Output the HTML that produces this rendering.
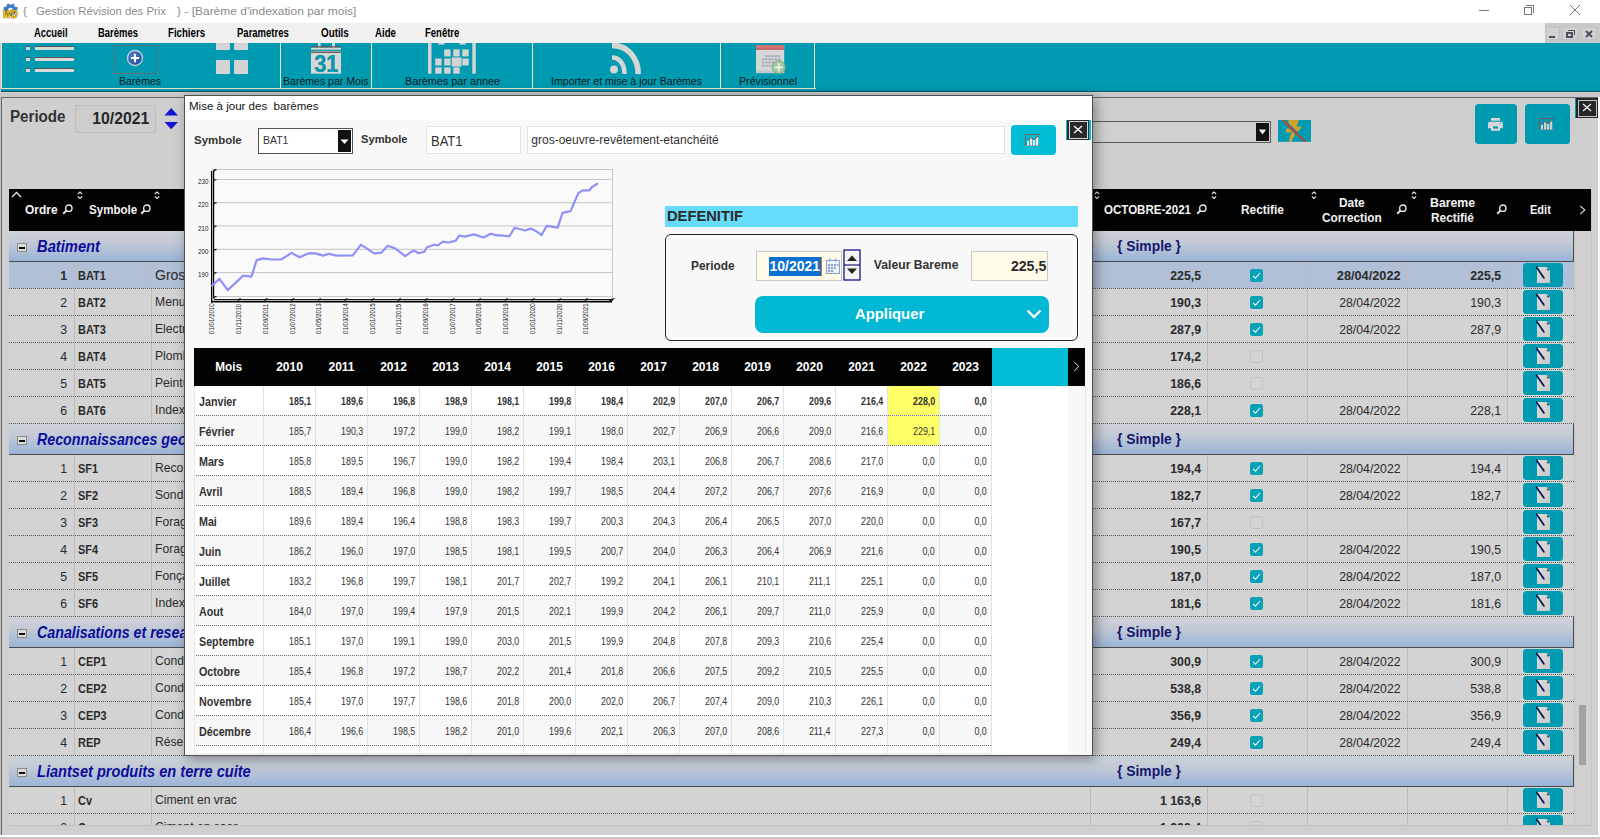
<!DOCTYPE html>
<html><head><meta charset="utf-8">
<style>
*{margin:0;padding:0;box-sizing:border-box}
html,body{width:1600px;height:839px;overflow:hidden;background:#fff;font-family:"Liberation Sans",sans-serif;color:#222}
.abs{position:absolute}
.t{position:absolute;white-space:nowrap;line-height:1}
.dot{position:absolute;height:1px;background:repeating-linear-gradient(90deg,#5a5a5a 0 1px,transparent 1px 2px)}
.vl{position:absolute;width:1px}
</style></head><body>

<div class="abs" style="left:0;top:0;width:1600px;height:23px;background:#fff"></div>
<svg class="abs" style="left:0;top:0" width="22" height="22" viewBox="0 0 22 22">
<g fill="#3f7dc6"><circle cx="10.5" cy="10.2" r="5.6"/>
<rect x="7" y="3.8" width="2.6" height="3" transform="rotate(-20 8.3 5.3)"/><rect x="11.6" y="3.8" width="2.6" height="3" transform="rotate(20 12.9 5.3)"/>
<rect x="3.6" y="7" width="2.8" height="2.6" transform="rotate(-30 5 8.3)"/><rect x="14.8" y="7" width="2.8" height="2.6" transform="rotate(30 16.2 8.3)"/></g>
<circle cx="10.5" cy="10.4" r="2.6" fill="#fff"/>
<text x="3" y="17.7" font-family="Liberation Sans" font-weight="bold" font-style="italic" font-size="10" textLength="14.5" lengthAdjust="spacingAndGlyphs" fill="#ffc400" stroke="#2a2000" stroke-width="0.7" paint-order="stroke">WD</text></svg>
<div class="t" style="left:23.00px;top:5.97px;font-size:11.5px;font-weight:normal;font-style:normal;color:#8e8a8c;">{</div>
<div class="t" style="left:36.00px;top:5.97px;font-size:11.5px;font-weight:normal;font-style:normal;color:#8e8a8c;transform:scaleX(0.9874);transform-origin:0 0;">Gestion Révision des Prix</div>
<div class="t" style="left:176.80px;top:5.97px;font-size:11.5px;font-weight:normal;font-style:normal;color:#8e8a8c;transform:scaleX(1.0417);transform-origin:0 0;">} - [Barème d'indexation par mois]</div>
<div class="abs" style="left:1479px;top:10px;width:10px;height:1px;background:#777"></div>
<div class="abs" style="left:1524px;top:7px;width:8px;height:8px;border:1px solid #777"></div>
<div class="abs" style="left:1526px;top:5px;width:8px;height:8px;border-top:1px solid #777;border-right:1px solid #777"></div>
<svg class="abs" style="left:1569px;top:4px" width="12" height="12"><path d="M1 1L11 11M11 1L1 11" stroke="#777" stroke-width="1"/></svg>
<div class="abs" style="left:0;top:23px;width:1600px;height:20px;background:#f0f0f0"></div>
<div class="t" style="left:34.00px;top:26.84px;font-size:12px;font-weight:bold;font-style:normal;color:#000;transform:scaleX(0.7849);transform-origin:0 0;">Accueil</div>
<div class="t" style="left:98.00px;top:26.84px;font-size:12px;font-weight:bold;font-style:normal;color:#000;transform:scaleX(0.7890);transform-origin:0 0;">Barèmes</div>
<div class="t" style="left:168.00px;top:26.84px;font-size:12px;font-weight:bold;font-style:normal;color:#000;transform:scaleX(0.8041);transform-origin:0 0;">Fichiers</div>
<div class="t" style="left:237.00px;top:26.84px;font-size:12px;font-weight:bold;font-style:normal;color:#000;transform:scaleX(0.7923);transform-origin:0 0;">Parametres</div>
<div class="t" style="left:321.00px;top:26.84px;font-size:12px;font-weight:bold;font-style:normal;color:#000;transform:scaleX(0.8177);transform-origin:0 0;">Outils</div>
<div class="t" style="left:375.00px;top:26.84px;font-size:12px;font-weight:bold;font-style:normal;color:#000;transform:scaleX(0.8076);transform-origin:0 0;">Aide</div>
<div class="t" style="left:424.70px;top:26.84px;font-size:12px;font-weight:bold;font-style:normal;color:#000;transform:scaleX(0.7913);transform-origin:0 0;">Fenêtre</div>
<div class="abs" style="left:1545px;top:23px;width:55px;height:20px;background:#c9c9c9"></div>
<div class="abs" style="left:1546px;top:27px;width:14px;height:13px;background:#d2d2d2;border:1px solid #c2c2c2"></div>
<div class="abs" style="left:1562px;top:27px;width:16px;height:13px;background:#d2d2d2;border:1px solid #c2c2c2"></div>
<div class="abs" style="left:1581px;top:27px;width:16px;height:13px;background:#d2d2d2;border:1px solid #c2c2c2"></div>
<div class="abs" style="left:1549px;top:36px;width:6px;height:2px;background:#4a5060"></div>
<div class="abs" style="left:1566px;top:32px;width:7px;height:6px;border:2px solid #4a5060;border-top-width:2px"></div>
<div class="abs" style="left:1568px;top:30px;width:7px;height:5px;border-top:1px solid #4a5060;border-right:1px solid #4a5060"></div>
<svg class="abs" style="left:1585px;top:30px" width="8" height="8"><path d="M1 1L7 7M7 1L1 7" stroke="#4a5060" stroke-width="2"/></svg>
<div class="abs" style="left:0;top:43px;width:1600px;height:48px;background:linear-gradient(#009bb1 0,#009bb1 40px,#0094aa 48px)"></div>
<div class="abs" style="left:0;top:43px;width:1px;height:49px;background:#c8c8c8"></div>
<div class="abs" style="left:1px;top:88px;width:815px;height:1px;background:#ece2c4"></div>
<div class="abs" style="left:1px;top:43px;width:1px;height:46px;background:#ece2c4"></div>
<div class="abs" style="left:280px;top:43px;width:1px;height:46px;background:#ece2c4"></div>
<div class="abs" style="left:371px;top:43px;width:1px;height:46px;background:#ece2c4"></div>
<div class="abs" style="left:532px;top:43px;width:1px;height:46px;background:#ece2c4"></div>
<div class="abs" style="left:720px;top:43px;width:1px;height:46px;background:#ece2c4"></div>
<div class="abs" style="left:814px;top:43px;width:1px;height:46px;background:#ece2c4"></div>
<div class="abs" style="left:1px;top:91px;width:1599px;height:1px;background:#005c70"></div>
<div class="abs" style="left:0;top:92px;width:1600px;height:1px;background:#d6d0d0"></div>
<div class="abs" style="left:0;top:93px;width:1600px;height:4px;background:#c8c8c8"></div>
<div class="abs" style="left:26px;top:46px;width:4px;height:4px;background:#d8d8d8;border-top:1px solid #555"></div>
<div class="abs" style="left:35px;top:46px;width:39px;height:4px;background:#d8d8d8;border-top:1px solid #555"></div>
<div class="abs" style="left:26px;top:57px;width:4px;height:4px;background:#d8d8d8;border-top:1px solid #555"></div>
<div class="abs" style="left:35px;top:57px;width:39px;height:4px;background:#d8d8d8;border-top:1px solid #555"></div>
<div class="abs" style="left:26px;top:68px;width:4px;height:4px;background:#d8d8d8;border-top:1px solid #555"></div>
<div class="abs" style="left:35px;top:68px;width:39px;height:4px;background:#d8d8d8;border-top:1px solid #555"></div>
<div class="abs" style="left:114px;top:45px;width:43px;height:29px;border:1px solid #5f6e74"></div>
<svg class="abs" style="left:126px;top:49px" width="18" height="18"><defs><radialGradient id="pg" cx="0.4" cy="0.35" r="0.7"><stop offset="0" stop-color="#4a80d0"/><stop offset="1" stop-color="#1e4ea0"/></radialGradient></defs><circle cx="9" cy="9" r="8.2" fill="#c4ccd8"/><circle cx="9" cy="9" r="6.8" fill="url(#pg)"/><path d="M9 4.8V13.2M4.8 9H13.2" stroke="#fff" stroke-width="2"/></svg>
<div class="t" style="left:119.30px;top:76.29px;font-size:11px;font-weight:normal;font-style:normal;color:#001820;transform:scaleX(0.9565);transform-origin:0 0;">Barèmes</div>
<div class="abs" style="left:216px;top:43px;width:14px;height:7px;background:#d4d4d4;border-radius:1px"></div>
<div class="abs" style="left:234px;top:43px;width:14px;height:7px;background:#d4d4d4;border-radius:1px"></div>
<div class="abs" style="left:216px;top:60px;width:14px;height:14px;background:#d4d4d4;border-radius:1px"></div>
<div class="abs" style="left:234px;top:60px;width:14px;height:14px;background:#d4d4d4;border-radius:1px"></div>
<svg class="abs" style="left:311px;top:43px" width="30" height="31" viewBox="0 0 30 31">
<rect x="7" y="0" width="2.6" height="5" fill="#d6d6d6"/><rect x="21" y="0" width="3" height="5" fill="#d6d6d6"/>
<rect x="0" y="3.2" width="30" height="1.5" fill="#5e5050"/><rect x="0" y="4.7" width="30" height="2" fill="#d6d6d6"/>
<rect x="0" y="8" width="30" height="22.7" fill="#d6d6d6"/><rect x="0" y="8.6" width="30" height="1.3" fill="#5e5050"/>
<text x="3.6" y="29.4" font-family="Liberation Sans" font-weight="bold" font-size="23.5" fill="#5e5050" transform="scale(0.92,1)">31</text>
<text x="3.6" y="28.6" font-family="Liberation Sans" font-weight="bold" font-size="23.5" fill="#009bb1" transform="scale(0.92,1)">31</text></svg>
<div class="t" style="left:283.40px;top:76.29px;font-size:11px;font-weight:normal;font-style:normal;color:#001820;transform:scaleX(0.9580);transform-origin:0 0;">Barèmes par Mois</div>
<svg class="abs" style="left:428px;top:43px" width="48" height="31" viewBox="0 0 48 31"><g fill="#d4d4d4">
<rect x="0" y="0" width="3.5" height="30.7"/><rect x="44.3" y="0" width="3.5" height="30.7"/>
<rect x="10.3" y="0" width="6.3" height="1.6"/><rect x="31.4" y="0" width="6.2" height="1.6"/>
<rect x="16.2" y="6.4" width="6.4" height="7"/><rect x="25.3" y="6.4" width="6.4" height="7"/><rect x="34.3" y="6.4" width="6.4" height="7"/>
<rect x="7.2" y="15.5" width="6.4" height="7"/><rect x="16.2" y="15.5" width="6.4" height="7"/><rect x="23.7" y="14.4" width="9.8" height="9.2"/><rect x="34.3" y="15.5" width="6.4" height="7"/>
<rect x="7.2" y="24.4" width="6.4" height="6.3"/><rect x="16.2" y="24.4" width="6.4" height="6.3"/><rect x="25.3" y="24.4" width="6.4" height="6.3"/></g></svg>
<div class="t" style="left:405.00px;top:76.29px;font-size:11px;font-weight:normal;font-style:normal;color:#001820;transform:scaleX(0.9834);transform-origin:0 0;">Barèmes par annee</div>
<svg class="abs" style="left:600px;top:43px" width="50" height="32" viewBox="600 43 50 32">
<circle cx="614" cy="69.5" r="3.9" fill="#d6d6d6"/>
<path d="M612 57.5C619.5 57.5 624.5 64 624.5 74" stroke="#d6d6d6" stroke-width="4.6" fill="none"/>
<path d="M612 45.4C627 45.4 638.2 57 638.2 74" stroke="#d6d6d6" stroke-width="5.6" fill="none"/></svg>
<div class="t" style="left:551.00px;top:76.29px;font-size:11px;font-weight:normal;font-style:normal;color:#001820;transform:scaleX(0.9612);transform-origin:0 0;">Importer et mise à jour Barèmes</div>
<svg class="abs" style="left:755.8px;top:44.7px" width="36" height="30" viewBox="0 0 36 30">
<rect x="0" y="0" width="28.2" height="28.1" fill="#d6d6d6"/><rect x="0" y="25.5" width="28.2" height="2.6" fill="#c4c8d0"/>
<rect x="0" y="0" width="28.2" height="4.6" fill="#d27272"/><rect x="0" y="3.6" width="28.2" height="1" fill="#b85858"/>
<g fill="#9ea4b4"><rect x="9.3" y="10.2" width="2.2" height="1.8"/><rect x="12.5" y="10.2" width="2.2" height="1.8"/><rect x="15.7" y="10.2" width="2.2" height="1.8"/><rect x="18.9" y="10.2" width="2.2" height="1.8"/><rect x="22.1" y="10.2" width="2.2" height="1.8"/><rect x="6.1" y="13.4" width="2.2" height="1.8"/><rect x="9.3" y="13.4" width="2.2" height="1.8"/><rect x="12.5" y="13.4" width="2.2" height="1.8"/><rect x="15.7" y="13.4" width="2.2" height="1.8"/><rect x="18.9" y="13.4" width="2.2" height="1.8"/><rect x="22.1" y="13.4" width="2.2" height="1.8"/><rect x="6.1" y="16.6" width="2.2" height="1.8"/><rect x="9.3" y="16.6" width="2.2" height="1.8"/><rect x="12.5" y="16.6" width="2.2" height="1.8"/><rect x="15.7" y="16.6" width="2.2" height="1.8"/><rect x="18.9" y="16.6" width="2.2" height="1.8"/><rect x="22.1" y="16.6" width="2.2" height="1.8"/><rect x="6.1" y="19.8" width="2.2" height="1.8"/><rect x="9.3" y="19.8" width="2.2" height="1.8"/><rect x="12.5" y="19.8" width="2.2" height="1.8"/><rect x="15.7" y="19.8" width="2.2" height="1.8"/><rect x="18.9" y="19.8" width="2.2" height="1.8"/><rect x="22.1" y="19.8" width="2.2" height="1.8"/></g>
<circle cx="22.7" cy="22.3" r="6.6" fill="#a2c8a2" stroke="#6e9c6e" stroke-width="0.8"/>
<path d="M22.7 18.3V26.3M18.7 22.3H26.7" stroke="#eef4ee" stroke-width="1.8"/></svg>
<div class="t" style="left:739.00px;top:76.29px;font-size:11px;font-weight:normal;font-style:normal;color:#001820;transform:scaleX(0.9680);transform-origin:0 0;">Prévisionnel</div>
<div class="abs" style="left:0;top:97px;width:1600px;height:739px;background:#cfcfcf"></div>
<div class="abs" style="left:0;top:97px;width:1px;height:739px;background:#c4c4c4"></div>
<div class="abs" style="left:1px;top:97px;width:1px;height:739px;background:#646464"></div>
<div class="abs" style="left:1px;top:97px;width:1598px;height:1px;background:#646464"></div>
<div class="abs" style="left:1598px;top:97px;width:2px;height:739px;background:#f6f6f6"></div>
<div class="abs" style="left:0;top:835px;width:1600px;height:2px;background:#fff"></div>
<div class="abs" style="left:0;top:837px;width:1600px;height:2px;background:#c4c4c4"></div>
<div class="t" style="left:10.10px;top:108.63px;font-size:15.8px;font-weight:bold;font-style:normal;color:#333;transform:scaleX(0.9577);transform-origin:0 0;">Periode</div>
<div class="abs" style="left:75px;top:105px;width:81px;height:28px;background:#cdcdcd;border:1px solid #bdbdbd"></div>
<div class="t" style="left:89.72px;top:109.92px;font-size:16.4px;font-weight:bold;font-style:normal;color:#262626;transform:scaleX(0.9616);transform-origin:100% 0;">10/2021</div>
<svg class="abs" style="left:164px;top:107px" width="15" height="23"><path d="M0.5 8.5L7.2 1L14 8.5Z" fill="#1414d4"/><path d="M0.5 15L7.2 22.3L14 15Z" fill="#1414d4"/></svg>
<div class="abs" style="left:1000px;top:121px;width:271px;height:22px;background:#d0d0d0;border:1.5px solid #5a5a5a"></div>
<div class="abs" style="left:1256px;top:123px;width:13px;height:18px;background:#111"></div>
<svg class="abs" style="left:1258px;top:129px" width="10" height="6"><path d="M0.8 0.6H8.2L4.5 5.4Z" fill="#eee"/></svg>
<svg class="abs" style="left:1278px;top:120px" width="33" height="22" viewBox="0 0 33 22"><rect width="33" height="21.8" fill="#009bb1"/>
<path d="M10 0H21L18.5 6.5H24L20 12L17.5 10.5L17 15L14.5 19L13.5 21.8H11L12 16L14 12.5H8V8.5H12Z" fill="#d4a030"/>
<path d="M4.5 0L27.5 21.8" stroke="#009bb1" stroke-width="3.6"/>
<path d="M4.5 0L27.5 21.8" stroke="#d23c28" stroke-width="1.8"/></svg>
<div class="abs" style="left:1475px;top:104px;width:42px;height:40px;background:#009bb1;border-radius:3.5px"></div>
<svg class="abs" style="left:1488px;top:118px" width="15" height="13" viewBox="0 0 15 13"><g fill="#d8d8d8">
<rect x="3" y="0" width="9" height="2.7"/><path d="M0 5.2Q0 3.7 1.5 3.7H13.3Q14.8 3.7 14.8 5.2V10.2H0Z"/>
<rect x="3" y="7.3" width="9" height="5.5"/></g><rect x="5" y="8.4" width="5" height="2.2" fill="#009bb1"/><circle cx="12.3" cy="5.3" r="0.6" fill="#009bb1"/></svg>
<div class="abs" style="left:1525px;top:104px;width:45px;height:40px;background:#009bb1;border-radius:3.5px"></div>
<svg class="abs" style="left:1539px;top:118px" width="16" height="12" viewBox="0 0 16 12">
<path d="M0.5 11.5V0.5H15.5" fill="none" stroke="#6a5a5a" stroke-width="1"/><path d="M0.5 11.5H15.5" stroke="#8a7a7a" stroke-width="0.8"/>
<g fill="#d0d0d0"><rect x="2" y="6.5" width="2" height="5"/><rect x="5" y="3.5" width="2.2" height="8"/><rect x="8" y="5.5" width="2.2" height="6"/><rect x="11" y="2.8" width="2.2" height="8.7"/></g>
<path d="M2.8 6.5L6 3.5L9 5.5L12 3L14 2" stroke="#6a5050" stroke-width="1" fill="none"/></svg>
<div class="abs" style="left:1575px;top:98px;width:3px;height:20px;background:#009bb1"></div>
<div class="abs" style="left:1576px;top:98px;width:22px;height:20px;background:#262626"></div>
<div class="abs" style="left:1577.5px;top:99.5px;width:19px;height:17px;border:1px solid #c4c4c4"></div>
<svg class="abs" style="left:1582px;top:103px" width="10" height="9"><path d="M1 1L9 8M9 1L1 8" stroke="#f0f0f0" stroke-width="1.4"/></svg>
<div class="abs" style="left:9px;top:189px;width:1582px;height:42px;background:#030303"></div>
<svg class="abs" style="left:11px;top:191px" width="11" height="7"><path d="M1 6L5.5 1.5L10 6" stroke="#eee" stroke-width="1.3" fill="none"/></svg>
<div class="t" style="left:25.25px;top:204.09px;font-size:12.3px;font-weight:bold;font-style:normal;color:#f2f2f2;transform:scaleX(0.9748);transform-origin:0 0;">Ordre</div>
<svg class="abs" style="left:62px;top:204px" width="11" height="11"><circle cx="6.8" cy="4.2" r="3.2" fill="none" stroke="#e6e6e6" stroke-width="1.4"/><path d="M4.6 6.4L1.2 9.8" stroke="#e6e6e6" stroke-width="2"/></svg>
<svg class="abs" style="left:76.5px;top:190.5px" width="6" height="9"><path d="M0.8 3L3 1L5.2 3M0.8 5.5L3 7.5L5.2 5.5" stroke="#e4e4e4" stroke-width="1.1" fill="none"/></svg>
<div class="t" style="left:88.70px;top:204.09px;font-size:12.3px;font-weight:bold;font-style:normal;color:#f2f2f2;transform:scaleX(0.9402);transform-origin:0 0;">Symbole</div>
<svg class="abs" style="left:140px;top:204px" width="11" height="11"><circle cx="6.8" cy="4.2" r="3.2" fill="none" stroke="#e6e6e6" stroke-width="1.4"/><path d="M4.6 6.4L1.2 9.8" stroke="#e6e6e6" stroke-width="2"/></svg>
<svg class="abs" style="left:153.5px;top:190.5px" width="6" height="9"><path d="M0.8 3L3 1L5.2 3M0.8 5.5L3 7.5L5.2 5.5" stroke="#e4e4e4" stroke-width="1.1" fill="none"/></svg>
<svg class="abs" style="left:1093.5px;top:190.5px" width="6" height="9"><path d="M0.8 3L3 1L5.2 3M0.8 5.5L3 7.5L5.2 5.5" stroke="#e4e4e4" stroke-width="1.1" fill="none"/></svg>
<div class="t" style="left:1104.00px;top:204.09px;font-size:12.3px;font-weight:bold;font-style:normal;color:#f2f2f2;transform:scaleX(0.9382);transform-origin:0 0;">OCTOBRE-2021</div>
<svg class="abs" style="left:1196px;top:204px" width="11" height="11"><circle cx="6.8" cy="4.2" r="3.2" fill="none" stroke="#e6e6e6" stroke-width="1.4"/><path d="M4.6 6.4L1.2 9.8" stroke="#e6e6e6" stroke-width="2"/></svg>
<svg class="abs" style="left:1210.5px;top:190.5px" width="6" height="9"><path d="M0.8 3L3 1L5.2 3M0.8 5.5L3 7.5L5.2 5.5" stroke="#e4e4e4" stroke-width="1.1" fill="none"/></svg>
<div class="t" style="left:1241.00px;top:204.09px;font-size:12.3px;font-weight:bold;font-style:normal;color:#f2f2f2;transform:scaleX(0.9679);transform-origin:0 0;">Rectifie</div>
<svg class="abs" style="left:1310.5px;top:190.5px" width="6" height="9"><path d="M0.8 3L3 1L5.2 3M0.8 5.5L3 7.5L5.2 5.5" stroke="#e4e4e4" stroke-width="1.1" fill="none"/></svg>
<div class="t" style="left:1339.00px;top:197.39px;font-size:12.3px;font-weight:bold;font-style:normal;color:#f2f2f2;transform:scaleX(0.9641);transform-origin:0 0;">Date</div>
<div class="t" style="left:1321.80px;top:212.49px;font-size:12.3px;font-weight:bold;font-style:normal;color:#f2f2f2;transform:scaleX(0.9616);transform-origin:0 0;">Correction</div>
<svg class="abs" style="left:1396px;top:204px" width="11" height="11"><circle cx="6.8" cy="4.2" r="3.2" fill="none" stroke="#e6e6e6" stroke-width="1.4"/><path d="M4.6 6.4L1.2 9.8" stroke="#e6e6e6" stroke-width="2"/></svg>
<svg class="abs" style="left:1410.5px;top:190.5px" width="6" height="9"><path d="M0.8 3L3 1L5.2 3M0.8 5.5L3 7.5L5.2 5.5" stroke="#e4e4e4" stroke-width="1.1" fill="none"/></svg>
<div class="t" style="left:1430.00px;top:197.39px;font-size:12.3px;font-weight:bold;font-style:normal;color:#f2f2f2;">Bareme</div>
<div class="t" style="left:1431.00px;top:212.49px;font-size:12.3px;font-weight:bold;font-style:normal;color:#f2f2f2;transform:scaleX(0.9679);transform-origin:0 0;">Rectifié</div>
<svg class="abs" style="left:1496px;top:204px" width="11" height="11"><circle cx="6.8" cy="4.2" r="3.2" fill="none" stroke="#e6e6e6" stroke-width="1.4"/><path d="M4.6 6.4L1.2 9.8" stroke="#e6e6e6" stroke-width="2"/></svg>
<div class="t" style="left:1530.20px;top:204.09px;font-size:12.3px;font-weight:bold;font-style:normal;color:#f2f2f2;transform:scaleX(0.8954);transform-origin:0 0;">Edit</div>
<svg class="abs" style="left:1579px;top:205px" width="8" height="10"><path d="M1.3 0.8L5.8 5L1.3 9.2" stroke="#ddd" stroke-width="1.1" fill="none"/></svg>
<div class="abs" style="left:0;top:231px;width:1600px;height:594px;overflow:hidden">
<div class="abs" style="left:9px;top:0px;width:1565px;height:30px;background:linear-gradient(#cdd1d8,#c4cbd6 35%,#9bb3d8)"></div>
<div class="abs" style="left:9px;top:30px;width:1565px;height:1px;background:#4a4a4a"></div>
<div class="abs" style="left:1573px;top:0px;width:1px;height:31px;background:#4a4a4a"></div>
<div class="abs" style="left:17px;top:12px;width:10px;height:9px;background:#dcdcdc;border:1px solid #8a8a80"></div>
<div class="abs" style="left:19px;top:16px;width:6px;height:1.6px;background:#111"></div>
<div class="t" style="left:37.00px;top:8.46px;font-size:16px;font-weight:bold;font-style:italic;color:#0c0c9c;transform:scaleX(0.9204);transform-origin:0 0;">Batiment</div>
<div class="t" style="left:1117.00px;top:7.10px;font-size:15px;font-weight:bold;font-style:normal;color:#16166c;transform:scaleX(0.9250);transform-origin:0 0;">{ Simple }</div>
<div class="abs" style="left:9px;top:31px;width:1565px;height:26px;background:#b1c0d6"></div>
<div class="dot" style="left:9px;top:57px;width:1565px"></div>
<div class="vl" style="left:74px;top:31px;height:26px;background:#bcbcbc"></div>
<div class="vl" style="left:151px;top:31px;height:26px;background:#bcbcbc"></div>
<div class="vl" style="left:1090px;top:31px;height:26px;background:#bcbcbc"></div>
<div class="vl" style="left:1207px;top:31px;height:26px;background:#bcbcbc"></div>
<div class="vl" style="left:1307px;top:31px;height:26px;background:#bcbcbc"></div>
<div class="vl" style="left:1407px;top:31px;height:26px;background:#bcbcbc"></div>
<div class="vl" style="left:1507px;top:31px;height:26px;background:#bcbcbc"></div>
<div class="t" style="left:60.16px;top:38.59px;font-size:12.3px;font-weight:bold;font-style:normal;color:#2a2a2a;">1</div>
<div class="t" style="left:78.00px;top:38.59px;font-size:12.3px;font-weight:bold;font-style:normal;color:#2a2a2a;transform:scaleX(0.8900);transform-origin:0 0;">BAT1</div>
<div class="t" style="left:155.00px;top:37.15px;font-size:14px;font-weight:normal;font-style:normal;color:#2a2a2a;">Gros oeuvre</div>
<div class="t" style="left:1170.22px;top:38.59px;font-size:12.3px;font-weight:bold;font-style:normal;color:#2a2a2a;">225,5</div>
<div class="abs" style="left:1250px;top:38px;width:13px;height:13px;background:#08a2b6;border-radius:2.5px"></div>
<svg class="abs" style="left:1250px;top:38px" width="13" height="13"><path d="M3 6.8L5.5 9.2L10 4" stroke="#f4f4f4" stroke-width="1.1" fill="none"/></svg>
<div class="t" style="left:1339.15px;top:38.59px;font-size:12.3px;font-weight:bold;font-style:normal;color:#2a2a2a;transform:scaleX(1.0349);transform-origin:100% 0;">28/04/2022</div>
<div class="t" style="left:1470.22px;top:38.59px;font-size:12.3px;font-weight:bold;font-style:normal;color:#2a2a2a;">225,5</div>
<div class="abs" style="left:1523px;top:32px;width:40px;height:24px;background:#009bb1;border-radius:3.5px"></div>
<svg class="abs" style="left:1535px;top:35px" width="17" height="18" viewBox="0 0 17 18"><defs><linearGradient id="pp31" x1="0" y1="0" x2="1" y2="1"><stop offset="0" stop-color="#dcdcdc"/><stop offset="1" stop-color="#c8c8c8"/></linearGradient></defs><path d="M2 1H11.5L15 4.5V17H2Z" fill="url(#pp31)"/><path d="M11.5 1V4.5H15" fill="#b8b8b8"/><circle cx="13" cy="3.6" r="0.9" fill="#333"/><path d="M3 3L10 13" stroke="#999" stroke-width="1.2" opacity="0.6"/><path d="M1.5 1.2L8.8 11.8" stroke="#0c1650" stroke-width="1.7" stroke-linecap="round"/></svg>
<div class="abs" style="left:9px;top:58px;width:1565px;height:26px;background:#d3d3d3"></div>
<div class="dot" style="left:9px;top:84px;width:1565px"></div>
<div class="vl" style="left:74px;top:58px;height:26px;background:#bcbcbc"></div>
<div class="vl" style="left:151px;top:58px;height:26px;background:#bcbcbc"></div>
<div class="vl" style="left:1090px;top:58px;height:26px;background:#bcbcbc"></div>
<div class="vl" style="left:1207px;top:58px;height:26px;background:#bcbcbc"></div>
<div class="vl" style="left:1307px;top:58px;height:26px;background:#bcbcbc"></div>
<div class="vl" style="left:1407px;top:58px;height:26px;background:#bcbcbc"></div>
<div class="vl" style="left:1507px;top:58px;height:26px;background:#bcbcbc"></div>
<div class="t" style="left:60.16px;top:65.59px;font-size:12.3px;font-weight:normal;font-style:normal;color:#2a2a2a;">2</div>
<div class="t" style="left:78.00px;top:65.59px;font-size:12.3px;font-weight:bold;font-style:normal;color:#2a2a2a;transform:scaleX(0.8900);transform-origin:0 0;">BAT2</div>
<div class="t" style="left:155.00px;top:65.16px;font-size:12.8px;font-weight:normal;font-style:normal;color:#2a2a2a;transform:scaleX(0.9500);transform-origin:0 0;">Menuiserie</div>
<div class="t" style="left:1170.22px;top:65.59px;font-size:12.3px;font-weight:bold;font-style:normal;color:#2a2a2a;">190,3</div>
<div class="abs" style="left:1250px;top:65px;width:13px;height:13px;background:#08a2b6;border-radius:2.5px"></div>
<svg class="abs" style="left:1250px;top:65px" width="13" height="13"><path d="M3 6.8L5.5 9.2L10 4" stroke="#f4f4f4" stroke-width="1.1" fill="none"/></svg>
<div class="t" style="left:1339.15px;top:65.59px;font-size:12.3px;font-weight:normal;font-style:normal;color:#2a2a2a;transform:scaleX(0.9959);transform-origin:100% 0;">28/04/2022</div>
<div class="t" style="left:1470.22px;top:65.59px;font-size:12.3px;font-weight:normal;font-style:normal;color:#2a2a2a;">190,3</div>
<div class="abs" style="left:1523px;top:59px;width:40px;height:24px;background:#009bb1;border-radius:3.5px"></div>
<svg class="abs" style="left:1535px;top:62px" width="17" height="18" viewBox="0 0 17 18"><defs><linearGradient id="pp58" x1="0" y1="0" x2="1" y2="1"><stop offset="0" stop-color="#dcdcdc"/><stop offset="1" stop-color="#c8c8c8"/></linearGradient></defs><path d="M2 1H11.5L15 4.5V17H2Z" fill="url(#pp58)"/><path d="M11.5 1V4.5H15" fill="#b8b8b8"/><circle cx="13" cy="3.6" r="0.9" fill="#333"/><path d="M3 3L10 13" stroke="#999" stroke-width="1.2" opacity="0.6"/><path d="M1.5 1.2L8.8 11.8" stroke="#0c1650" stroke-width="1.7" stroke-linecap="round"/></svg>
<div class="abs" style="left:9px;top:85px;width:1565px;height:26px;background:#d3d3d3"></div>
<div class="dot" style="left:9px;top:111px;width:1565px"></div>
<div class="vl" style="left:74px;top:85px;height:26px;background:#bcbcbc"></div>
<div class="vl" style="left:151px;top:85px;height:26px;background:#bcbcbc"></div>
<div class="vl" style="left:1090px;top:85px;height:26px;background:#bcbcbc"></div>
<div class="vl" style="left:1207px;top:85px;height:26px;background:#bcbcbc"></div>
<div class="vl" style="left:1307px;top:85px;height:26px;background:#bcbcbc"></div>
<div class="vl" style="left:1407px;top:85px;height:26px;background:#bcbcbc"></div>
<div class="vl" style="left:1507px;top:85px;height:26px;background:#bcbcbc"></div>
<div class="t" style="left:60.16px;top:92.59px;font-size:12.3px;font-weight:normal;font-style:normal;color:#2a2a2a;">3</div>
<div class="t" style="left:78.00px;top:92.59px;font-size:12.3px;font-weight:bold;font-style:normal;color:#2a2a2a;transform:scaleX(0.8900);transform-origin:0 0;">BAT3</div>
<div class="t" style="left:155.00px;top:92.16px;font-size:12.8px;font-weight:normal;font-style:normal;color:#2a2a2a;transform:scaleX(0.9500);transform-origin:0 0;">Electricité</div>
<div class="t" style="left:1170.22px;top:92.59px;font-size:12.3px;font-weight:bold;font-style:normal;color:#2a2a2a;">287,9</div>
<div class="abs" style="left:1250px;top:92px;width:13px;height:13px;background:#08a2b6;border-radius:2.5px"></div>
<svg class="abs" style="left:1250px;top:92px" width="13" height="13"><path d="M3 6.8L5.5 9.2L10 4" stroke="#f4f4f4" stroke-width="1.1" fill="none"/></svg>
<div class="t" style="left:1339.15px;top:92.59px;font-size:12.3px;font-weight:normal;font-style:normal;color:#2a2a2a;transform:scaleX(0.9959);transform-origin:100% 0;">28/04/2022</div>
<div class="t" style="left:1470.22px;top:92.59px;font-size:12.3px;font-weight:normal;font-style:normal;color:#2a2a2a;">287,9</div>
<div class="abs" style="left:1523px;top:86px;width:40px;height:24px;background:#009bb1;border-radius:3.5px"></div>
<svg class="abs" style="left:1535px;top:89px" width="17" height="18" viewBox="0 0 17 18"><defs><linearGradient id="pp85" x1="0" y1="0" x2="1" y2="1"><stop offset="0" stop-color="#dcdcdc"/><stop offset="1" stop-color="#c8c8c8"/></linearGradient></defs><path d="M2 1H11.5L15 4.5V17H2Z" fill="url(#pp85)"/><path d="M11.5 1V4.5H15" fill="#b8b8b8"/><circle cx="13" cy="3.6" r="0.9" fill="#333"/><path d="M3 3L10 13" stroke="#999" stroke-width="1.2" opacity="0.6"/><path d="M1.5 1.2L8.8 11.8" stroke="#0c1650" stroke-width="1.7" stroke-linecap="round"/></svg>
<div class="abs" style="left:9px;top:112px;width:1565px;height:26px;background:#d3d3d3"></div>
<div class="dot" style="left:9px;top:138px;width:1565px"></div>
<div class="vl" style="left:74px;top:112px;height:26px;background:#bcbcbc"></div>
<div class="vl" style="left:151px;top:112px;height:26px;background:#bcbcbc"></div>
<div class="vl" style="left:1090px;top:112px;height:26px;background:#bcbcbc"></div>
<div class="vl" style="left:1207px;top:112px;height:26px;background:#bcbcbc"></div>
<div class="vl" style="left:1307px;top:112px;height:26px;background:#bcbcbc"></div>
<div class="vl" style="left:1407px;top:112px;height:26px;background:#bcbcbc"></div>
<div class="vl" style="left:1507px;top:112px;height:26px;background:#bcbcbc"></div>
<div class="t" style="left:60.16px;top:119.59px;font-size:12.3px;font-weight:normal;font-style:normal;color:#2a2a2a;">4</div>
<div class="t" style="left:78.00px;top:119.59px;font-size:12.3px;font-weight:bold;font-style:normal;color:#2a2a2a;transform:scaleX(0.8900);transform-origin:0 0;">BAT4</div>
<div class="t" style="left:155.00px;top:119.16px;font-size:12.8px;font-weight:normal;font-style:normal;color:#2a2a2a;transform:scaleX(0.9500);transform-origin:0 0;">Plomberie</div>
<div class="t" style="left:1170.22px;top:119.59px;font-size:12.3px;font-weight:bold;font-style:normal;color:#2a2a2a;">174,2</div>
<div class="abs" style="left:1250px;top:119px;width:13px;height:13px;border:1px solid #c2c2c2;border-radius:2.5px"></div>
<div class="abs" style="left:1523px;top:113px;width:40px;height:24px;background:#009bb1;border-radius:3.5px"></div>
<svg class="abs" style="left:1535px;top:116px" width="17" height="18" viewBox="0 0 17 18"><defs><linearGradient id="pp112" x1="0" y1="0" x2="1" y2="1"><stop offset="0" stop-color="#dcdcdc"/><stop offset="1" stop-color="#c8c8c8"/></linearGradient></defs><path d="M2 1H11.5L15 4.5V17H2Z" fill="url(#pp112)"/><path d="M11.5 1V4.5H15" fill="#b8b8b8"/><circle cx="13" cy="3.6" r="0.9" fill="#333"/><path d="M3 3L10 13" stroke="#999" stroke-width="1.2" opacity="0.6"/><path d="M1.5 1.2L8.8 11.8" stroke="#0c1650" stroke-width="1.7" stroke-linecap="round"/></svg>
<div class="abs" style="left:9px;top:139px;width:1565px;height:26px;background:#d3d3d3"></div>
<div class="dot" style="left:9px;top:165px;width:1565px"></div>
<div class="vl" style="left:74px;top:139px;height:26px;background:#bcbcbc"></div>
<div class="vl" style="left:151px;top:139px;height:26px;background:#bcbcbc"></div>
<div class="vl" style="left:1090px;top:139px;height:26px;background:#bcbcbc"></div>
<div class="vl" style="left:1207px;top:139px;height:26px;background:#bcbcbc"></div>
<div class="vl" style="left:1307px;top:139px;height:26px;background:#bcbcbc"></div>
<div class="vl" style="left:1407px;top:139px;height:26px;background:#bcbcbc"></div>
<div class="vl" style="left:1507px;top:139px;height:26px;background:#bcbcbc"></div>
<div class="t" style="left:60.16px;top:146.59px;font-size:12.3px;font-weight:normal;font-style:normal;color:#2a2a2a;">5</div>
<div class="t" style="left:78.00px;top:146.59px;font-size:12.3px;font-weight:bold;font-style:normal;color:#2a2a2a;transform:scaleX(0.8900);transform-origin:0 0;">BAT5</div>
<div class="t" style="left:155.00px;top:146.16px;font-size:12.8px;font-weight:normal;font-style:normal;color:#2a2a2a;transform:scaleX(0.9500);transform-origin:0 0;">Peinture</div>
<div class="t" style="left:1170.22px;top:146.59px;font-size:12.3px;font-weight:bold;font-style:normal;color:#2a2a2a;">186,6</div>
<div class="abs" style="left:1250px;top:146px;width:13px;height:13px;border:1px solid #c2c2c2;border-radius:2.5px"></div>
<div class="abs" style="left:1523px;top:140px;width:40px;height:24px;background:#009bb1;border-radius:3.5px"></div>
<svg class="abs" style="left:1535px;top:143px" width="17" height="18" viewBox="0 0 17 18"><defs><linearGradient id="pp139" x1="0" y1="0" x2="1" y2="1"><stop offset="0" stop-color="#dcdcdc"/><stop offset="1" stop-color="#c8c8c8"/></linearGradient></defs><path d="M2 1H11.5L15 4.5V17H2Z" fill="url(#pp139)"/><path d="M11.5 1V4.5H15" fill="#b8b8b8"/><circle cx="13" cy="3.6" r="0.9" fill="#333"/><path d="M3 3L10 13" stroke="#999" stroke-width="1.2" opacity="0.6"/><path d="M1.5 1.2L8.8 11.8" stroke="#0c1650" stroke-width="1.7" stroke-linecap="round"/></svg>
<div class="abs" style="left:9px;top:166px;width:1565px;height:26px;background:#d3d3d3"></div>
<div class="dot" style="left:9px;top:192px;width:1565px"></div>
<div class="vl" style="left:74px;top:166px;height:26px;background:#bcbcbc"></div>
<div class="vl" style="left:151px;top:166px;height:26px;background:#bcbcbc"></div>
<div class="vl" style="left:1090px;top:166px;height:26px;background:#bcbcbc"></div>
<div class="vl" style="left:1207px;top:166px;height:26px;background:#bcbcbc"></div>
<div class="vl" style="left:1307px;top:166px;height:26px;background:#bcbcbc"></div>
<div class="vl" style="left:1407px;top:166px;height:26px;background:#bcbcbc"></div>
<div class="vl" style="left:1507px;top:166px;height:26px;background:#bcbcbc"></div>
<div class="t" style="left:60.16px;top:173.59px;font-size:12.3px;font-weight:normal;font-style:normal;color:#2a2a2a;">6</div>
<div class="t" style="left:78.00px;top:173.59px;font-size:12.3px;font-weight:bold;font-style:normal;color:#2a2a2a;transform:scaleX(0.8900);transform-origin:0 0;">BAT6</div>
<div class="t" style="left:155.00px;top:173.16px;font-size:12.8px;font-weight:normal;font-style:normal;color:#2a2a2a;transform:scaleX(0.9500);transform-origin:0 0;">Index</div>
<div class="t" style="left:1170.22px;top:173.59px;font-size:12.3px;font-weight:bold;font-style:normal;color:#2a2a2a;">228,1</div>
<div class="abs" style="left:1250px;top:173px;width:13px;height:13px;background:#08a2b6;border-radius:2.5px"></div>
<svg class="abs" style="left:1250px;top:173px" width="13" height="13"><path d="M3 6.8L5.5 9.2L10 4" stroke="#f4f4f4" stroke-width="1.1" fill="none"/></svg>
<div class="t" style="left:1339.15px;top:173.59px;font-size:12.3px;font-weight:normal;font-style:normal;color:#2a2a2a;transform:scaleX(0.9959);transform-origin:100% 0;">28/04/2022</div>
<div class="t" style="left:1470.22px;top:173.59px;font-size:12.3px;font-weight:normal;font-style:normal;color:#2a2a2a;">228,1</div>
<div class="abs" style="left:1523px;top:167px;width:40px;height:24px;background:#009bb1;border-radius:3.5px"></div>
<svg class="abs" style="left:1535px;top:170px" width="17" height="18" viewBox="0 0 17 18"><defs><linearGradient id="pp166" x1="0" y1="0" x2="1" y2="1"><stop offset="0" stop-color="#dcdcdc"/><stop offset="1" stop-color="#c8c8c8"/></linearGradient></defs><path d="M2 1H11.5L15 4.5V17H2Z" fill="url(#pp166)"/><path d="M11.5 1V4.5H15" fill="#b8b8b8"/><circle cx="13" cy="3.6" r="0.9" fill="#333"/><path d="M3 3L10 13" stroke="#999" stroke-width="1.2" opacity="0.6"/><path d="M1.5 1.2L8.8 11.8" stroke="#0c1650" stroke-width="1.7" stroke-linecap="round"/></svg>
<div class="abs" style="left:9px;top:193px;width:1565px;height:30px;background:linear-gradient(#cdd1d8,#c4cbd6 35%,#9bb3d8)"></div>
<div class="abs" style="left:9px;top:223px;width:1565px;height:1px;background:#4a4a4a"></div>
<div class="abs" style="left:1573px;top:193px;width:1px;height:31px;background:#4a4a4a"></div>
<div class="abs" style="left:17px;top:205px;width:10px;height:9px;background:#dcdcdc;border:1px solid #8a8a80"></div>
<div class="abs" style="left:19px;top:209px;width:6px;height:1.6px;background:#111"></div>
<div class="t" style="left:37.00px;top:201.46px;font-size:16px;font-weight:bold;font-style:italic;color:#0c0c9c;transform:scaleX(0.8900);transform-origin:0 0;">Reconnaissances geotechniques</div>
<div class="t" style="left:1117.00px;top:200.10px;font-size:15px;font-weight:bold;font-style:normal;color:#16166c;transform:scaleX(0.9250);transform-origin:0 0;">{ Simple }</div>
<div class="abs" style="left:9px;top:224px;width:1565px;height:26px;background:#d3d3d3"></div>
<div class="dot" style="left:9px;top:250px;width:1565px"></div>
<div class="vl" style="left:74px;top:224px;height:26px;background:#bcbcbc"></div>
<div class="vl" style="left:151px;top:224px;height:26px;background:#bcbcbc"></div>
<div class="vl" style="left:1090px;top:224px;height:26px;background:#bcbcbc"></div>
<div class="vl" style="left:1207px;top:224px;height:26px;background:#bcbcbc"></div>
<div class="vl" style="left:1307px;top:224px;height:26px;background:#bcbcbc"></div>
<div class="vl" style="left:1407px;top:224px;height:26px;background:#bcbcbc"></div>
<div class="vl" style="left:1507px;top:224px;height:26px;background:#bcbcbc"></div>
<div class="t" style="left:60.16px;top:231.59px;font-size:12.3px;font-weight:normal;font-style:normal;color:#2a2a2a;">1</div>
<div class="t" style="left:78.00px;top:231.59px;font-size:12.3px;font-weight:bold;font-style:normal;color:#2a2a2a;transform:scaleX(0.8900);transform-origin:0 0;">SF1</div>
<div class="t" style="left:155.00px;top:231.16px;font-size:12.8px;font-weight:normal;font-style:normal;color:#2a2a2a;transform:scaleX(0.9500);transform-origin:0 0;">Reconnaissance</div>
<div class="t" style="left:1170.22px;top:231.59px;font-size:12.3px;font-weight:bold;font-style:normal;color:#2a2a2a;">194,4</div>
<div class="abs" style="left:1250px;top:231px;width:13px;height:13px;background:#08a2b6;border-radius:2.5px"></div>
<svg class="abs" style="left:1250px;top:231px" width="13" height="13"><path d="M3 6.8L5.5 9.2L10 4" stroke="#f4f4f4" stroke-width="1.1" fill="none"/></svg>
<div class="t" style="left:1339.15px;top:231.59px;font-size:12.3px;font-weight:normal;font-style:normal;color:#2a2a2a;transform:scaleX(0.9959);transform-origin:100% 0;">28/04/2022</div>
<div class="t" style="left:1470.22px;top:231.59px;font-size:12.3px;font-weight:normal;font-style:normal;color:#2a2a2a;">194,4</div>
<div class="abs" style="left:1523px;top:225px;width:40px;height:24px;background:#009bb1;border-radius:3.5px"></div>
<svg class="abs" style="left:1535px;top:228px" width="17" height="18" viewBox="0 0 17 18"><defs><linearGradient id="pp224" x1="0" y1="0" x2="1" y2="1"><stop offset="0" stop-color="#dcdcdc"/><stop offset="1" stop-color="#c8c8c8"/></linearGradient></defs><path d="M2 1H11.5L15 4.5V17H2Z" fill="url(#pp224)"/><path d="M11.5 1V4.5H15" fill="#b8b8b8"/><circle cx="13" cy="3.6" r="0.9" fill="#333"/><path d="M3 3L10 13" stroke="#999" stroke-width="1.2" opacity="0.6"/><path d="M1.5 1.2L8.8 11.8" stroke="#0c1650" stroke-width="1.7" stroke-linecap="round"/></svg>
<div class="abs" style="left:9px;top:251px;width:1565px;height:26px;background:#d3d3d3"></div>
<div class="dot" style="left:9px;top:277px;width:1565px"></div>
<div class="vl" style="left:74px;top:251px;height:26px;background:#bcbcbc"></div>
<div class="vl" style="left:151px;top:251px;height:26px;background:#bcbcbc"></div>
<div class="vl" style="left:1090px;top:251px;height:26px;background:#bcbcbc"></div>
<div class="vl" style="left:1207px;top:251px;height:26px;background:#bcbcbc"></div>
<div class="vl" style="left:1307px;top:251px;height:26px;background:#bcbcbc"></div>
<div class="vl" style="left:1407px;top:251px;height:26px;background:#bcbcbc"></div>
<div class="vl" style="left:1507px;top:251px;height:26px;background:#bcbcbc"></div>
<div class="t" style="left:60.16px;top:258.59px;font-size:12.3px;font-weight:normal;font-style:normal;color:#2a2a2a;">2</div>
<div class="t" style="left:78.00px;top:258.59px;font-size:12.3px;font-weight:bold;font-style:normal;color:#2a2a2a;transform:scaleX(0.8900);transform-origin:0 0;">SF2</div>
<div class="t" style="left:155.00px;top:258.16px;font-size:12.8px;font-weight:normal;font-style:normal;color:#2a2a2a;transform:scaleX(0.9500);transform-origin:0 0;">Sondage</div>
<div class="t" style="left:1170.22px;top:258.59px;font-size:12.3px;font-weight:bold;font-style:normal;color:#2a2a2a;">182,7</div>
<div class="abs" style="left:1250px;top:258px;width:13px;height:13px;background:#08a2b6;border-radius:2.5px"></div>
<svg class="abs" style="left:1250px;top:258px" width="13" height="13"><path d="M3 6.8L5.5 9.2L10 4" stroke="#f4f4f4" stroke-width="1.1" fill="none"/></svg>
<div class="t" style="left:1339.15px;top:258.59px;font-size:12.3px;font-weight:normal;font-style:normal;color:#2a2a2a;transform:scaleX(0.9959);transform-origin:100% 0;">28/04/2022</div>
<div class="t" style="left:1470.22px;top:258.59px;font-size:12.3px;font-weight:normal;font-style:normal;color:#2a2a2a;">182,7</div>
<div class="abs" style="left:1523px;top:252px;width:40px;height:24px;background:#009bb1;border-radius:3.5px"></div>
<svg class="abs" style="left:1535px;top:255px" width="17" height="18" viewBox="0 0 17 18"><defs><linearGradient id="pp251" x1="0" y1="0" x2="1" y2="1"><stop offset="0" stop-color="#dcdcdc"/><stop offset="1" stop-color="#c8c8c8"/></linearGradient></defs><path d="M2 1H11.5L15 4.5V17H2Z" fill="url(#pp251)"/><path d="M11.5 1V4.5H15" fill="#b8b8b8"/><circle cx="13" cy="3.6" r="0.9" fill="#333"/><path d="M3 3L10 13" stroke="#999" stroke-width="1.2" opacity="0.6"/><path d="M1.5 1.2L8.8 11.8" stroke="#0c1650" stroke-width="1.7" stroke-linecap="round"/></svg>
<div class="abs" style="left:9px;top:278px;width:1565px;height:26px;background:#d3d3d3"></div>
<div class="dot" style="left:9px;top:304px;width:1565px"></div>
<div class="vl" style="left:74px;top:278px;height:26px;background:#bcbcbc"></div>
<div class="vl" style="left:151px;top:278px;height:26px;background:#bcbcbc"></div>
<div class="vl" style="left:1090px;top:278px;height:26px;background:#bcbcbc"></div>
<div class="vl" style="left:1207px;top:278px;height:26px;background:#bcbcbc"></div>
<div class="vl" style="left:1307px;top:278px;height:26px;background:#bcbcbc"></div>
<div class="vl" style="left:1407px;top:278px;height:26px;background:#bcbcbc"></div>
<div class="vl" style="left:1507px;top:278px;height:26px;background:#bcbcbc"></div>
<div class="t" style="left:60.16px;top:285.59px;font-size:12.3px;font-weight:normal;font-style:normal;color:#2a2a2a;">3</div>
<div class="t" style="left:78.00px;top:285.59px;font-size:12.3px;font-weight:bold;font-style:normal;color:#2a2a2a;transform:scaleX(0.8900);transform-origin:0 0;">SF3</div>
<div class="t" style="left:155.00px;top:285.16px;font-size:12.8px;font-weight:normal;font-style:normal;color:#2a2a2a;transform:scaleX(0.9500);transform-origin:0 0;">Forage</div>
<div class="t" style="left:1170.22px;top:285.59px;font-size:12.3px;font-weight:bold;font-style:normal;color:#2a2a2a;">167,7</div>
<div class="abs" style="left:1250px;top:285px;width:13px;height:13px;border:1px solid #c2c2c2;border-radius:2.5px"></div>
<div class="abs" style="left:1523px;top:279px;width:40px;height:24px;background:#009bb1;border-radius:3.5px"></div>
<svg class="abs" style="left:1535px;top:282px" width="17" height="18" viewBox="0 0 17 18"><defs><linearGradient id="pp278" x1="0" y1="0" x2="1" y2="1"><stop offset="0" stop-color="#dcdcdc"/><stop offset="1" stop-color="#c8c8c8"/></linearGradient></defs><path d="M2 1H11.5L15 4.5V17H2Z" fill="url(#pp278)"/><path d="M11.5 1V4.5H15" fill="#b8b8b8"/><circle cx="13" cy="3.6" r="0.9" fill="#333"/><path d="M3 3L10 13" stroke="#999" stroke-width="1.2" opacity="0.6"/><path d="M1.5 1.2L8.8 11.8" stroke="#0c1650" stroke-width="1.7" stroke-linecap="round"/></svg>
<div class="abs" style="left:9px;top:305px;width:1565px;height:26px;background:#d3d3d3"></div>
<div class="dot" style="left:9px;top:331px;width:1565px"></div>
<div class="vl" style="left:74px;top:305px;height:26px;background:#bcbcbc"></div>
<div class="vl" style="left:151px;top:305px;height:26px;background:#bcbcbc"></div>
<div class="vl" style="left:1090px;top:305px;height:26px;background:#bcbcbc"></div>
<div class="vl" style="left:1207px;top:305px;height:26px;background:#bcbcbc"></div>
<div class="vl" style="left:1307px;top:305px;height:26px;background:#bcbcbc"></div>
<div class="vl" style="left:1407px;top:305px;height:26px;background:#bcbcbc"></div>
<div class="vl" style="left:1507px;top:305px;height:26px;background:#bcbcbc"></div>
<div class="t" style="left:60.16px;top:312.59px;font-size:12.3px;font-weight:normal;font-style:normal;color:#2a2a2a;">4</div>
<div class="t" style="left:78.00px;top:312.59px;font-size:12.3px;font-weight:bold;font-style:normal;color:#2a2a2a;transform:scaleX(0.8900);transform-origin:0 0;">SF4</div>
<div class="t" style="left:155.00px;top:312.16px;font-size:12.8px;font-weight:normal;font-style:normal;color:#2a2a2a;transform:scaleX(0.9500);transform-origin:0 0;">Forage</div>
<div class="t" style="left:1170.22px;top:312.59px;font-size:12.3px;font-weight:bold;font-style:normal;color:#2a2a2a;">190,5</div>
<div class="abs" style="left:1250px;top:312px;width:13px;height:13px;background:#08a2b6;border-radius:2.5px"></div>
<svg class="abs" style="left:1250px;top:312px" width="13" height="13"><path d="M3 6.8L5.5 9.2L10 4" stroke="#f4f4f4" stroke-width="1.1" fill="none"/></svg>
<div class="t" style="left:1339.15px;top:312.59px;font-size:12.3px;font-weight:normal;font-style:normal;color:#2a2a2a;transform:scaleX(0.9959);transform-origin:100% 0;">28/04/2022</div>
<div class="t" style="left:1470.22px;top:312.59px;font-size:12.3px;font-weight:normal;font-style:normal;color:#2a2a2a;">190,5</div>
<div class="abs" style="left:1523px;top:306px;width:40px;height:24px;background:#009bb1;border-radius:3.5px"></div>
<svg class="abs" style="left:1535px;top:309px" width="17" height="18" viewBox="0 0 17 18"><defs><linearGradient id="pp305" x1="0" y1="0" x2="1" y2="1"><stop offset="0" stop-color="#dcdcdc"/><stop offset="1" stop-color="#c8c8c8"/></linearGradient></defs><path d="M2 1H11.5L15 4.5V17H2Z" fill="url(#pp305)"/><path d="M11.5 1V4.5H15" fill="#b8b8b8"/><circle cx="13" cy="3.6" r="0.9" fill="#333"/><path d="M3 3L10 13" stroke="#999" stroke-width="1.2" opacity="0.6"/><path d="M1.5 1.2L8.8 11.8" stroke="#0c1650" stroke-width="1.7" stroke-linecap="round"/></svg>
<div class="abs" style="left:9px;top:332px;width:1565px;height:26px;background:#d3d3d3"></div>
<div class="dot" style="left:9px;top:358px;width:1565px"></div>
<div class="vl" style="left:74px;top:332px;height:26px;background:#bcbcbc"></div>
<div class="vl" style="left:151px;top:332px;height:26px;background:#bcbcbc"></div>
<div class="vl" style="left:1090px;top:332px;height:26px;background:#bcbcbc"></div>
<div class="vl" style="left:1207px;top:332px;height:26px;background:#bcbcbc"></div>
<div class="vl" style="left:1307px;top:332px;height:26px;background:#bcbcbc"></div>
<div class="vl" style="left:1407px;top:332px;height:26px;background:#bcbcbc"></div>
<div class="vl" style="left:1507px;top:332px;height:26px;background:#bcbcbc"></div>
<div class="t" style="left:60.16px;top:339.59px;font-size:12.3px;font-weight:normal;font-style:normal;color:#2a2a2a;">5</div>
<div class="t" style="left:78.00px;top:339.59px;font-size:12.3px;font-weight:bold;font-style:normal;color:#2a2a2a;transform:scaleX(0.8900);transform-origin:0 0;">SF5</div>
<div class="t" style="left:155.00px;top:339.16px;font-size:12.8px;font-weight:normal;font-style:normal;color:#2a2a2a;transform:scaleX(0.9500);transform-origin:0 0;">Fonçage</div>
<div class="t" style="left:1170.22px;top:339.59px;font-size:12.3px;font-weight:bold;font-style:normal;color:#2a2a2a;">187,0</div>
<div class="abs" style="left:1250px;top:339px;width:13px;height:13px;background:#08a2b6;border-radius:2.5px"></div>
<svg class="abs" style="left:1250px;top:339px" width="13" height="13"><path d="M3 6.8L5.5 9.2L10 4" stroke="#f4f4f4" stroke-width="1.1" fill="none"/></svg>
<div class="t" style="left:1339.15px;top:339.59px;font-size:12.3px;font-weight:normal;font-style:normal;color:#2a2a2a;transform:scaleX(0.9959);transform-origin:100% 0;">28/04/2022</div>
<div class="t" style="left:1470.22px;top:339.59px;font-size:12.3px;font-weight:normal;font-style:normal;color:#2a2a2a;">187,0</div>
<div class="abs" style="left:1523px;top:333px;width:40px;height:24px;background:#009bb1;border-radius:3.5px"></div>
<svg class="abs" style="left:1535px;top:336px" width="17" height="18" viewBox="0 0 17 18"><defs><linearGradient id="pp332" x1="0" y1="0" x2="1" y2="1"><stop offset="0" stop-color="#dcdcdc"/><stop offset="1" stop-color="#c8c8c8"/></linearGradient></defs><path d="M2 1H11.5L15 4.5V17H2Z" fill="url(#pp332)"/><path d="M11.5 1V4.5H15" fill="#b8b8b8"/><circle cx="13" cy="3.6" r="0.9" fill="#333"/><path d="M3 3L10 13" stroke="#999" stroke-width="1.2" opacity="0.6"/><path d="M1.5 1.2L8.8 11.8" stroke="#0c1650" stroke-width="1.7" stroke-linecap="round"/></svg>
<div class="abs" style="left:9px;top:359px;width:1565px;height:26px;background:#d3d3d3"></div>
<div class="dot" style="left:9px;top:385px;width:1565px"></div>
<div class="vl" style="left:74px;top:359px;height:26px;background:#bcbcbc"></div>
<div class="vl" style="left:151px;top:359px;height:26px;background:#bcbcbc"></div>
<div class="vl" style="left:1090px;top:359px;height:26px;background:#bcbcbc"></div>
<div class="vl" style="left:1207px;top:359px;height:26px;background:#bcbcbc"></div>
<div class="vl" style="left:1307px;top:359px;height:26px;background:#bcbcbc"></div>
<div class="vl" style="left:1407px;top:359px;height:26px;background:#bcbcbc"></div>
<div class="vl" style="left:1507px;top:359px;height:26px;background:#bcbcbc"></div>
<div class="t" style="left:60.16px;top:366.59px;font-size:12.3px;font-weight:normal;font-style:normal;color:#2a2a2a;">6</div>
<div class="t" style="left:78.00px;top:366.59px;font-size:12.3px;font-weight:bold;font-style:normal;color:#2a2a2a;transform:scaleX(0.8900);transform-origin:0 0;">SF6</div>
<div class="t" style="left:155.00px;top:366.16px;font-size:12.8px;font-weight:normal;font-style:normal;color:#2a2a2a;transform:scaleX(0.9500);transform-origin:0 0;">Index</div>
<div class="t" style="left:1170.22px;top:366.59px;font-size:12.3px;font-weight:bold;font-style:normal;color:#2a2a2a;">181,6</div>
<div class="abs" style="left:1250px;top:366px;width:13px;height:13px;background:#08a2b6;border-radius:2.5px"></div>
<svg class="abs" style="left:1250px;top:366px" width="13" height="13"><path d="M3 6.8L5.5 9.2L10 4" stroke="#f4f4f4" stroke-width="1.1" fill="none"/></svg>
<div class="t" style="left:1339.15px;top:366.59px;font-size:12.3px;font-weight:normal;font-style:normal;color:#2a2a2a;transform:scaleX(0.9959);transform-origin:100% 0;">28/04/2022</div>
<div class="t" style="left:1470.22px;top:366.59px;font-size:12.3px;font-weight:normal;font-style:normal;color:#2a2a2a;">181,6</div>
<div class="abs" style="left:1523px;top:360px;width:40px;height:24px;background:#009bb1;border-radius:3.5px"></div>
<svg class="abs" style="left:1535px;top:363px" width="17" height="18" viewBox="0 0 17 18"><defs><linearGradient id="pp359" x1="0" y1="0" x2="1" y2="1"><stop offset="0" stop-color="#dcdcdc"/><stop offset="1" stop-color="#c8c8c8"/></linearGradient></defs><path d="M2 1H11.5L15 4.5V17H2Z" fill="url(#pp359)"/><path d="M11.5 1V4.5H15" fill="#b8b8b8"/><circle cx="13" cy="3.6" r="0.9" fill="#333"/><path d="M3 3L10 13" stroke="#999" stroke-width="1.2" opacity="0.6"/><path d="M1.5 1.2L8.8 11.8" stroke="#0c1650" stroke-width="1.7" stroke-linecap="round"/></svg>
<div class="abs" style="left:9px;top:386px;width:1565px;height:30px;background:linear-gradient(#cdd1d8,#c4cbd6 35%,#9bb3d8)"></div>
<div class="abs" style="left:9px;top:416px;width:1565px;height:1px;background:#4a4a4a"></div>
<div class="abs" style="left:1573px;top:386px;width:1px;height:31px;background:#4a4a4a"></div>
<div class="abs" style="left:17px;top:398px;width:10px;height:9px;background:#dcdcdc;border:1px solid #8a8a80"></div>
<div class="abs" style="left:19px;top:402px;width:6px;height:1.6px;background:#111"></div>
<div class="t" style="left:37.00px;top:394.46px;font-size:16px;font-weight:bold;font-style:italic;color:#0c0c9c;transform:scaleX(0.8900);transform-origin:0 0;">Canalisations et reseaux</div>
<div class="t" style="left:1117.00px;top:393.10px;font-size:15px;font-weight:bold;font-style:normal;color:#16166c;transform:scaleX(0.9250);transform-origin:0 0;">{ Simple }</div>
<div class="abs" style="left:9px;top:417px;width:1565px;height:26px;background:#d3d3d3"></div>
<div class="dot" style="left:9px;top:443px;width:1565px"></div>
<div class="vl" style="left:74px;top:417px;height:26px;background:#bcbcbc"></div>
<div class="vl" style="left:151px;top:417px;height:26px;background:#bcbcbc"></div>
<div class="vl" style="left:1090px;top:417px;height:26px;background:#bcbcbc"></div>
<div class="vl" style="left:1207px;top:417px;height:26px;background:#bcbcbc"></div>
<div class="vl" style="left:1307px;top:417px;height:26px;background:#bcbcbc"></div>
<div class="vl" style="left:1407px;top:417px;height:26px;background:#bcbcbc"></div>
<div class="vl" style="left:1507px;top:417px;height:26px;background:#bcbcbc"></div>
<div class="t" style="left:60.16px;top:424.59px;font-size:12.3px;font-weight:normal;font-style:normal;color:#2a2a2a;">1</div>
<div class="t" style="left:78.00px;top:424.59px;font-size:12.3px;font-weight:bold;font-style:normal;color:#2a2a2a;transform:scaleX(0.8900);transform-origin:0 0;">CEP1</div>
<div class="t" style="left:155.00px;top:424.16px;font-size:12.8px;font-weight:normal;font-style:normal;color:#2a2a2a;transform:scaleX(0.9500);transform-origin:0 0;">Conduites</div>
<div class="t" style="left:1170.22px;top:424.59px;font-size:12.3px;font-weight:bold;font-style:normal;color:#2a2a2a;">300,9</div>
<div class="abs" style="left:1250px;top:424px;width:13px;height:13px;background:#08a2b6;border-radius:2.5px"></div>
<svg class="abs" style="left:1250px;top:424px" width="13" height="13"><path d="M3 6.8L5.5 9.2L10 4" stroke="#f4f4f4" stroke-width="1.1" fill="none"/></svg>
<div class="t" style="left:1339.15px;top:424.59px;font-size:12.3px;font-weight:normal;font-style:normal;color:#2a2a2a;transform:scaleX(0.9959);transform-origin:100% 0;">28/04/2022</div>
<div class="t" style="left:1470.22px;top:424.59px;font-size:12.3px;font-weight:normal;font-style:normal;color:#2a2a2a;">300,9</div>
<div class="abs" style="left:1523px;top:418px;width:40px;height:24px;background:#009bb1;border-radius:3.5px"></div>
<svg class="abs" style="left:1535px;top:421px" width="17" height="18" viewBox="0 0 17 18"><defs><linearGradient id="pp417" x1="0" y1="0" x2="1" y2="1"><stop offset="0" stop-color="#dcdcdc"/><stop offset="1" stop-color="#c8c8c8"/></linearGradient></defs><path d="M2 1H11.5L15 4.5V17H2Z" fill="url(#pp417)"/><path d="M11.5 1V4.5H15" fill="#b8b8b8"/><circle cx="13" cy="3.6" r="0.9" fill="#333"/><path d="M3 3L10 13" stroke="#999" stroke-width="1.2" opacity="0.6"/><path d="M1.5 1.2L8.8 11.8" stroke="#0c1650" stroke-width="1.7" stroke-linecap="round"/></svg>
<div class="abs" style="left:9px;top:444px;width:1565px;height:26px;background:#d3d3d3"></div>
<div class="dot" style="left:9px;top:470px;width:1565px"></div>
<div class="vl" style="left:74px;top:444px;height:26px;background:#bcbcbc"></div>
<div class="vl" style="left:151px;top:444px;height:26px;background:#bcbcbc"></div>
<div class="vl" style="left:1090px;top:444px;height:26px;background:#bcbcbc"></div>
<div class="vl" style="left:1207px;top:444px;height:26px;background:#bcbcbc"></div>
<div class="vl" style="left:1307px;top:444px;height:26px;background:#bcbcbc"></div>
<div class="vl" style="left:1407px;top:444px;height:26px;background:#bcbcbc"></div>
<div class="vl" style="left:1507px;top:444px;height:26px;background:#bcbcbc"></div>
<div class="t" style="left:60.16px;top:451.59px;font-size:12.3px;font-weight:normal;font-style:normal;color:#2a2a2a;">2</div>
<div class="t" style="left:78.00px;top:451.59px;font-size:12.3px;font-weight:bold;font-style:normal;color:#2a2a2a;transform:scaleX(0.8900);transform-origin:0 0;">CEP2</div>
<div class="t" style="left:155.00px;top:451.16px;font-size:12.8px;font-weight:normal;font-style:normal;color:#2a2a2a;transform:scaleX(0.9500);transform-origin:0 0;">Conduites</div>
<div class="t" style="left:1170.22px;top:451.59px;font-size:12.3px;font-weight:bold;font-style:normal;color:#2a2a2a;">538,8</div>
<div class="abs" style="left:1250px;top:451px;width:13px;height:13px;background:#08a2b6;border-radius:2.5px"></div>
<svg class="abs" style="left:1250px;top:451px" width="13" height="13"><path d="M3 6.8L5.5 9.2L10 4" stroke="#f4f4f4" stroke-width="1.1" fill="none"/></svg>
<div class="t" style="left:1339.15px;top:451.59px;font-size:12.3px;font-weight:normal;font-style:normal;color:#2a2a2a;transform:scaleX(0.9959);transform-origin:100% 0;">28/04/2022</div>
<div class="t" style="left:1470.22px;top:451.59px;font-size:12.3px;font-weight:normal;font-style:normal;color:#2a2a2a;">538,8</div>
<div class="abs" style="left:1523px;top:445px;width:40px;height:24px;background:#009bb1;border-radius:3.5px"></div>
<svg class="abs" style="left:1535px;top:448px" width="17" height="18" viewBox="0 0 17 18"><defs><linearGradient id="pp444" x1="0" y1="0" x2="1" y2="1"><stop offset="0" stop-color="#dcdcdc"/><stop offset="1" stop-color="#c8c8c8"/></linearGradient></defs><path d="M2 1H11.5L15 4.5V17H2Z" fill="url(#pp444)"/><path d="M11.5 1V4.5H15" fill="#b8b8b8"/><circle cx="13" cy="3.6" r="0.9" fill="#333"/><path d="M3 3L10 13" stroke="#999" stroke-width="1.2" opacity="0.6"/><path d="M1.5 1.2L8.8 11.8" stroke="#0c1650" stroke-width="1.7" stroke-linecap="round"/></svg>
<div class="abs" style="left:9px;top:471px;width:1565px;height:26px;background:#d3d3d3"></div>
<div class="dot" style="left:9px;top:497px;width:1565px"></div>
<div class="vl" style="left:74px;top:471px;height:26px;background:#bcbcbc"></div>
<div class="vl" style="left:151px;top:471px;height:26px;background:#bcbcbc"></div>
<div class="vl" style="left:1090px;top:471px;height:26px;background:#bcbcbc"></div>
<div class="vl" style="left:1207px;top:471px;height:26px;background:#bcbcbc"></div>
<div class="vl" style="left:1307px;top:471px;height:26px;background:#bcbcbc"></div>
<div class="vl" style="left:1407px;top:471px;height:26px;background:#bcbcbc"></div>
<div class="vl" style="left:1507px;top:471px;height:26px;background:#bcbcbc"></div>
<div class="t" style="left:60.16px;top:478.59px;font-size:12.3px;font-weight:normal;font-style:normal;color:#2a2a2a;">3</div>
<div class="t" style="left:78.00px;top:478.59px;font-size:12.3px;font-weight:bold;font-style:normal;color:#2a2a2a;transform:scaleX(0.8900);transform-origin:0 0;">CEP3</div>
<div class="t" style="left:155.00px;top:478.16px;font-size:12.8px;font-weight:normal;font-style:normal;color:#2a2a2a;transform:scaleX(0.9500);transform-origin:0 0;">Conduites</div>
<div class="t" style="left:1170.22px;top:478.59px;font-size:12.3px;font-weight:bold;font-style:normal;color:#2a2a2a;">356,9</div>
<div class="abs" style="left:1250px;top:478px;width:13px;height:13px;background:#08a2b6;border-radius:2.5px"></div>
<svg class="abs" style="left:1250px;top:478px" width="13" height="13"><path d="M3 6.8L5.5 9.2L10 4" stroke="#f4f4f4" stroke-width="1.1" fill="none"/></svg>
<div class="t" style="left:1339.15px;top:478.59px;font-size:12.3px;font-weight:normal;font-style:normal;color:#2a2a2a;transform:scaleX(0.9959);transform-origin:100% 0;">28/04/2022</div>
<div class="t" style="left:1470.22px;top:478.59px;font-size:12.3px;font-weight:normal;font-style:normal;color:#2a2a2a;">356,9</div>
<div class="abs" style="left:1523px;top:472px;width:40px;height:24px;background:#009bb1;border-radius:3.5px"></div>
<svg class="abs" style="left:1535px;top:475px" width="17" height="18" viewBox="0 0 17 18"><defs><linearGradient id="pp471" x1="0" y1="0" x2="1" y2="1"><stop offset="0" stop-color="#dcdcdc"/><stop offset="1" stop-color="#c8c8c8"/></linearGradient></defs><path d="M2 1H11.5L15 4.5V17H2Z" fill="url(#pp471)"/><path d="M11.5 1V4.5H15" fill="#b8b8b8"/><circle cx="13" cy="3.6" r="0.9" fill="#333"/><path d="M3 3L10 13" stroke="#999" stroke-width="1.2" opacity="0.6"/><path d="M1.5 1.2L8.8 11.8" stroke="#0c1650" stroke-width="1.7" stroke-linecap="round"/></svg>
<div class="abs" style="left:9px;top:498px;width:1565px;height:26px;background:#d3d3d3"></div>
<div class="dot" style="left:9px;top:524px;width:1565px"></div>
<div class="vl" style="left:74px;top:498px;height:26px;background:#bcbcbc"></div>
<div class="vl" style="left:151px;top:498px;height:26px;background:#bcbcbc"></div>
<div class="vl" style="left:1090px;top:498px;height:26px;background:#bcbcbc"></div>
<div class="vl" style="left:1207px;top:498px;height:26px;background:#bcbcbc"></div>
<div class="vl" style="left:1307px;top:498px;height:26px;background:#bcbcbc"></div>
<div class="vl" style="left:1407px;top:498px;height:26px;background:#bcbcbc"></div>
<div class="vl" style="left:1507px;top:498px;height:26px;background:#bcbcbc"></div>
<div class="t" style="left:60.16px;top:505.59px;font-size:12.3px;font-weight:normal;font-style:normal;color:#2a2a2a;">4</div>
<div class="t" style="left:78.00px;top:505.59px;font-size:12.3px;font-weight:bold;font-style:normal;color:#2a2a2a;transform:scaleX(0.8900);transform-origin:0 0;">REP</div>
<div class="t" style="left:155.00px;top:505.16px;font-size:12.8px;font-weight:normal;font-style:normal;color:#2a2a2a;transform:scaleX(0.9500);transform-origin:0 0;">Réseaux</div>
<div class="t" style="left:1170.22px;top:505.59px;font-size:12.3px;font-weight:bold;font-style:normal;color:#2a2a2a;">249,4</div>
<div class="abs" style="left:1250px;top:505px;width:13px;height:13px;background:#08a2b6;border-radius:2.5px"></div>
<svg class="abs" style="left:1250px;top:505px" width="13" height="13"><path d="M3 6.8L5.5 9.2L10 4" stroke="#f4f4f4" stroke-width="1.1" fill="none"/></svg>
<div class="t" style="left:1339.15px;top:505.59px;font-size:12.3px;font-weight:normal;font-style:normal;color:#2a2a2a;transform:scaleX(0.9959);transform-origin:100% 0;">28/04/2022</div>
<div class="t" style="left:1470.22px;top:505.59px;font-size:12.3px;font-weight:normal;font-style:normal;color:#2a2a2a;">249,4</div>
<div class="abs" style="left:1523px;top:499px;width:40px;height:24px;background:#009bb1;border-radius:3.5px"></div>
<svg class="abs" style="left:1535px;top:502px" width="17" height="18" viewBox="0 0 17 18"><defs><linearGradient id="pp498" x1="0" y1="0" x2="1" y2="1"><stop offset="0" stop-color="#dcdcdc"/><stop offset="1" stop-color="#c8c8c8"/></linearGradient></defs><path d="M2 1H11.5L15 4.5V17H2Z" fill="url(#pp498)"/><path d="M11.5 1V4.5H15" fill="#b8b8b8"/><circle cx="13" cy="3.6" r="0.9" fill="#333"/><path d="M3 3L10 13" stroke="#999" stroke-width="1.2" opacity="0.6"/><path d="M1.5 1.2L8.8 11.8" stroke="#0c1650" stroke-width="1.7" stroke-linecap="round"/></svg>
<div class="abs" style="left:9px;top:525px;width:1565px;height:30px;background:linear-gradient(#cdd1d8,#c4cbd6 35%,#9bb3d8)"></div>
<div class="abs" style="left:9px;top:555px;width:1565px;height:1px;background:#4a4a4a"></div>
<div class="abs" style="left:1573px;top:525px;width:1px;height:31px;background:#4a4a4a"></div>
<div class="abs" style="left:17px;top:537px;width:10px;height:9px;background:#dcdcdc;border:1px solid #8a8a80"></div>
<div class="abs" style="left:19px;top:541px;width:6px;height:1.6px;background:#111"></div>
<div class="t" style="left:37.00px;top:533.46px;font-size:16px;font-weight:bold;font-style:italic;color:#0c0c9c;transform:scaleX(0.9106);transform-origin:0 0;">Liantset produits en terre cuite</div>
<div class="t" style="left:1117.00px;top:532.10px;font-size:15px;font-weight:bold;font-style:normal;color:#16166c;transform:scaleX(0.9250);transform-origin:0 0;">{ Simple }</div>
<div class="abs" style="left:9px;top:556px;width:1565px;height:26px;background:#d3d3d3"></div>
<div class="dot" style="left:9px;top:582px;width:1565px"></div>
<div class="vl" style="left:74px;top:556px;height:26px;background:#bcbcbc"></div>
<div class="vl" style="left:151px;top:556px;height:26px;background:#bcbcbc"></div>
<div class="vl" style="left:1090px;top:556px;height:26px;background:#bcbcbc"></div>
<div class="vl" style="left:1207px;top:556px;height:26px;background:#bcbcbc"></div>
<div class="vl" style="left:1307px;top:556px;height:26px;background:#bcbcbc"></div>
<div class="vl" style="left:1407px;top:556px;height:26px;background:#bcbcbc"></div>
<div class="vl" style="left:1507px;top:556px;height:26px;background:#bcbcbc"></div>
<div class="t" style="left:60.16px;top:563.59px;font-size:12.3px;font-weight:normal;font-style:normal;color:#2a2a2a;">1</div>
<div class="t" style="left:78.00px;top:563.59px;font-size:12.3px;font-weight:bold;font-style:normal;color:#2a2a2a;transform:scaleX(0.8900);transform-origin:0 0;">Cv</div>
<div class="t" style="left:155.00px;top:563.16px;font-size:12.8px;font-weight:normal;font-style:normal;color:#2a2a2a;transform:scaleX(0.9500);transform-origin:0 0;">Ciment en vrac</div>
<div class="t" style="left:1159.97px;top:563.59px;font-size:12.3px;font-weight:bold;font-style:normal;color:#2a2a2a;">1 163,6</div>
<div class="abs" style="left:1250px;top:563px;width:13px;height:13px;border:1px solid #c2c2c2;border-radius:2.5px"></div>
<div class="abs" style="left:1523px;top:557px;width:40px;height:24px;background:#009bb1;border-radius:3.5px"></div>
<svg class="abs" style="left:1535px;top:560px" width="17" height="18" viewBox="0 0 17 18"><defs><linearGradient id="pp556" x1="0" y1="0" x2="1" y2="1"><stop offset="0" stop-color="#dcdcdc"/><stop offset="1" stop-color="#c8c8c8"/></linearGradient></defs><path d="M2 1H11.5L15 4.5V17H2Z" fill="url(#pp556)"/><path d="M11.5 1V4.5H15" fill="#b8b8b8"/><circle cx="13" cy="3.6" r="0.9" fill="#333"/><path d="M3 3L10 13" stroke="#999" stroke-width="1.2" opacity="0.6"/><path d="M1.5 1.2L8.8 11.8" stroke="#0c1650" stroke-width="1.7" stroke-linecap="round"/></svg>
<div class="abs" style="left:9px;top:583px;width:1565px;height:26px;background:#d3d3d3"></div>
<div class="dot" style="left:9px;top:609px;width:1565px"></div>
<div class="vl" style="left:74px;top:583px;height:26px;background:#bcbcbc"></div>
<div class="vl" style="left:151px;top:583px;height:26px;background:#bcbcbc"></div>
<div class="vl" style="left:1090px;top:583px;height:26px;background:#bcbcbc"></div>
<div class="vl" style="left:1207px;top:583px;height:26px;background:#bcbcbc"></div>
<div class="vl" style="left:1307px;top:583px;height:26px;background:#bcbcbc"></div>
<div class="vl" style="left:1407px;top:583px;height:26px;background:#bcbcbc"></div>
<div class="vl" style="left:1507px;top:583px;height:26px;background:#bcbcbc"></div>
<div class="t" style="left:60.16px;top:590.59px;font-size:12.3px;font-weight:normal;font-style:normal;color:#2a2a2a;">2</div>
<div class="t" style="left:78.00px;top:590.59px;font-size:12.3px;font-weight:bold;font-style:normal;color:#2a2a2a;transform:scaleX(0.8900);transform-origin:0 0;">Cs</div>
<div class="t" style="left:155.00px;top:590.16px;font-size:12.8px;font-weight:normal;font-style:normal;color:#2a2a2a;transform:scaleX(0.9500);transform-origin:0 0;">Ciment en sacs</div>
<div class="t" style="left:1159.97px;top:590.59px;font-size:12.3px;font-weight:bold;font-style:normal;color:#2a2a2a;">1 203,4</div>
<div class="abs" style="left:1250px;top:590px;width:13px;height:13px;border:1px solid #c2c2c2;border-radius:2.5px"></div>
<div class="abs" style="left:1523px;top:584px;width:40px;height:24px;background:#009bb1;border-radius:3.5px"></div>
<svg class="abs" style="left:1535px;top:587px" width="17" height="18" viewBox="0 0 17 18"><defs><linearGradient id="pp583" x1="0" y1="0" x2="1" y2="1"><stop offset="0" stop-color="#dcdcdc"/><stop offset="1" stop-color="#c8c8c8"/></linearGradient></defs><path d="M2 1H11.5L15 4.5V17H2Z" fill="url(#pp583)"/><path d="M11.5 1V4.5H15" fill="#b8b8b8"/><circle cx="13" cy="3.6" r="0.9" fill="#333"/><path d="M3 3L10 13" stroke="#999" stroke-width="1.2" opacity="0.6"/><path d="M1.5 1.2L8.8 11.8" stroke="#0c1650" stroke-width="1.7" stroke-linecap="round"/></svg>
</div>
<div class="abs" style="left:1574px;top:231px;width:17px;height:594px;background:#d0d0d0;border-left:1px solid #c4c4c4"></div>
<div class="abs" style="left:1591px;top:189px;width:1px;height:636px;background:#c4c4c4"></div>
<div class="abs" style="left:1579px;top:705px;width:7px;height:60px;background:#a2a2a2"></div>
<div class="abs" style="left:9px;top:825px;width:1583px;height:1px;background:#c0c0c0"></div>
<div class="abs" style="left:184px;top:95px;width:909px;height:661px;background:#f8f8f8;border:1px solid #505050;box-shadow:3px 3px 12px rgba(0,0,0,0.38)"></div>
<div class="abs" style="left:185px;top:96px;width:907px;height:24px;background:#fff"></div>
<div class="t" style="left:188.50px;top:100.71px;font-size:11.8px;font-weight:normal;font-style:normal;color:#111;transform:scaleX(0.9776);transform-origin:0 0;">Mise à jour des&nbsp; barèmes</div>
<div class="t" style="left:194.00px;top:134.87px;font-size:11.5px;font-weight:bold;font-style:normal;color:#333;transform:scaleX(0.9952);transform-origin:0 0;">Symbole</div>
<div class="abs" style="left:258px;top:128px;width:95px;height:26px;background:#fff;border:1px solid #555"></div>
<div class="t" style="left:263.10px;top:134.67px;font-size:11.5px;font-weight:normal;font-style:normal;color:#333;transform:scaleX(0.9102);transform-origin:0 0;">BAT1</div>
<div class="abs" style="left:338px;top:130px;width:13px;height:22px;background:#111"></div>
<svg class="abs" style="left:340px;top:139px" width="10" height="6"><path d="M0.5 0.5H8.5L4.5 5Z" fill="#fff"/></svg>
<div class="t" style="left:360.70px;top:134.47px;font-size:11.5px;font-weight:bold;font-style:normal;color:#333;transform:scaleX(0.9702);transform-origin:0 0;">Symbole</div>
<div class="abs" style="left:426px;top:126px;width:95px;height:28px;background:#fff;border:1px solid #e2e2e2"></div>
<div class="t" style="left:430.50px;top:133.20px;font-size:15px;font-weight:normal;font-style:normal;color:#333;transform:scaleX(0.8654);transform-origin:0 0;">BAT1</div>
<div class="abs" style="left:527px;top:126px;width:478px;height:28px;background:#fff;border:1px solid #e2e2e2"></div>
<div class="t" style="left:531.30px;top:133.74px;font-size:12px;font-weight:normal;font-style:normal;color:#333;">gros-oeuvre-revêtement-etanchéité</div>
<div class="abs" style="left:1011px;top:125px;width:45px;height:30px;background:#00bcd4;border-radius:4px"></div>
<svg class="abs" style="left:1025px;top:134px" width="16" height="12" viewBox="0 0 16 12">
<path d="M0.5 11.5V0.5H15.5" fill="none" stroke="#6a6060" stroke-width="1"/><path d="M0.5 11.5H15.5" stroke="#8a8080" stroke-width="0.8"/>
<g fill="#eaeaea"><rect x="2" y="6.5" width="2" height="5"/><rect x="5" y="3.5" width="2.2" height="8"/><rect x="8" y="5.5" width="2.2" height="6"/><rect x="11" y="2.8" width="2.2" height="8.7"/></g>
<path d="M2.8 6.5L6 3.5L9 5.5L12 3L14 2" stroke="#6a5050" stroke-width="1" fill="none"/></svg>
<div class="abs" style="left:1066px;top:120px;width:25px;height:20px;background:#00bcd4"></div>
<div class="abs" style="left:1067px;top:120px;width:22px;height:20px;background:#2a2a2a"></div>
<div class="abs" style="left:1068.5px;top:121px;width:19px;height:18px;border:1px solid #d8d8d8"></div>
<svg class="abs" style="left:1073px;top:125px" width="10" height="9"><path d="M1 1L9 8M9 1L1 8" stroke="#f4f4f4" stroke-width="1.5"/></svg>
<svg class="abs" style="left:185px;top:160px" width="440" height="180" viewBox="185 160 440 180"><rect x="212" y="169.5" width="400.5" height="131" fill="#fafafa" stroke="#c6c6c6" stroke-width="1"/><line x1="216" y1="179.5" x2="612" y2="179.5" stroke="#c4c4c4" stroke-width="1"/><text x="0" y="0" font-family="Liberation Sans" font-size="7" fill="#1a1a1a" transform="translate(198,184.1) scale(0.9,1)">230</text><line x1="216" y1="202.7" x2="612" y2="202.7" stroke="#c4c4c4" stroke-width="1"/><text x="0" y="0" font-family="Liberation Sans" font-size="7" fill="#1a1a1a" transform="translate(198,207.29999999999998) scale(0.9,1)">220</text><line x1="216" y1="225.9" x2="612" y2="225.9" stroke="#c4c4c4" stroke-width="1"/><text x="0" y="0" font-family="Liberation Sans" font-size="7" fill="#1a1a1a" transform="translate(198,230.5) scale(0.9,1)">210</text><line x1="216" y1="249.3" x2="612" y2="249.3" stroke="#c4c4c4" stroke-width="1"/><text x="0" y="0" font-family="Liberation Sans" font-size="7" fill="#1a1a1a" transform="translate(198,253.9) scale(0.9,1)">200</text><line x1="216" y1="272.6" x2="612" y2="272.6" stroke="#c4c4c4" stroke-width="1"/><text x="0" y="0" font-family="Liberation Sans" font-size="7" fill="#1a1a1a" transform="translate(198,277.20000000000005) scale(0.9,1)">190</text><line x1="216" y1="296.6" x2="612" y2="296.6" stroke="#c4c4c4" stroke-width="1"/><path d="M211.6 171V302.5" stroke="#000" stroke-width="1.3" fill="none"/><path d="M213.6 172V298.5" stroke="#000" stroke-width="1.2" fill="none"/><path d="M211 301.8H612" stroke="#000" stroke-width="1.6" fill="none"/><path d="M214 299.6H612" stroke="#000" stroke-width="1" fill="none"/><path d="M213.6 172Q213.6 169.6 216.5 169.6" stroke="#000" stroke-width="1.3" fill="none"/><path d="M213.6 181.5Q213.6 179.5 216.5 179.5" stroke="#000" stroke-width="1.2" fill="none"/><path d="M213.6 204.7Q213.6 202.7 216.5 202.7" stroke="#000" stroke-width="1.2" fill="none"/><path d="M213.6 227.9Q213.6 225.9 216.5 225.9" stroke="#000" stroke-width="1.2" fill="none"/><path d="M213.6 251.3Q213.6 249.3 216.5 249.3" stroke="#000" stroke-width="1.2" fill="none"/><path d="M213.6 274.6Q213.6 272.6 216.5 272.6" stroke="#000" stroke-width="1.2" fill="none"/><path d="M213.6 298.6Q213.6 296.6 216.5 296.6" stroke="#000" stroke-width="1.2" fill="none"/><path d="M238.2 301Q238.2 298.6 240.8 298.6" stroke="#000" stroke-width="1" fill="none"/><path d="M264.9 301Q264.9 298.6 267.5 298.6" stroke="#000" stroke-width="1" fill="none"/><path d="M291.6 301Q291.6 298.6 294.2 298.6" stroke="#000" stroke-width="1" fill="none"/><path d="M318.3 301Q318.3 298.6 320.9 298.6" stroke="#000" stroke-width="1" fill="none"/><path d="M345.0 301Q345.0 298.6 347.6 298.6" stroke="#000" stroke-width="1" fill="none"/><path d="M371.7 301Q371.7 298.6 374.3 298.6" stroke="#000" stroke-width="1" fill="none"/><path d="M398.4 301Q398.4 298.6 401.0 298.6" stroke="#000" stroke-width="1" fill="none"/><path d="M425.1 301Q425.1 298.6 427.7 298.6" stroke="#000" stroke-width="1" fill="none"/><path d="M451.8 301Q451.8 298.6 454.4 298.6" stroke="#000" stroke-width="1" fill="none"/><path d="M478.5 301Q478.5 298.6 481.1 298.6" stroke="#000" stroke-width="1" fill="none"/><path d="M505.2 301Q505.2 298.6 507.8 298.6" stroke="#000" stroke-width="1" fill="none"/><path d="M531.9 301Q531.9 298.6 534.5 298.6" stroke="#000" stroke-width="1" fill="none"/><path d="M558.6 301Q558.6 298.6 561.2 298.6" stroke="#000" stroke-width="1" fill="none"/><path d="M585.3 301Q585.3 298.6 587.9 298.6" stroke="#000" stroke-width="1" fill="none"/><path d="M612.0 301Q612.0 298.6 614.6 298.6" stroke="#000" stroke-width="1" fill="none"/><path d="M609 301.8L612.5 298.8" stroke="#000" stroke-width="1.2"/><text font-family="Liberation Sans" font-size="6.6" fill="#1a1a1a" transform="translate(214.4,334) rotate(-90) scale(0.93,1)">01/01/2010</text><text font-family="Liberation Sans" font-size="6.6" fill="#1a1a1a" transform="translate(241.1,334) rotate(-90) scale(0.93,1)">01/11/2010</text><text font-family="Liberation Sans" font-size="6.6" fill="#1a1a1a" transform="translate(267.8,334) rotate(-90) scale(0.93,1)">01/09/2011</text><text font-family="Liberation Sans" font-size="6.6" fill="#1a1a1a" transform="translate(294.5,334) rotate(-90) scale(0.93,1)">01/07/2012</text><text font-family="Liberation Sans" font-size="6.6" fill="#1a1a1a" transform="translate(321.2,334) rotate(-90) scale(0.93,1)">01/05/2013</text><text font-family="Liberation Sans" font-size="6.6" fill="#1a1a1a" transform="translate(347.9,334) rotate(-90) scale(0.93,1)">01/03/2014</text><text font-family="Liberation Sans" font-size="6.6" fill="#1a1a1a" transform="translate(374.6,334) rotate(-90) scale(0.93,1)">01/01/2015</text><text font-family="Liberation Sans" font-size="6.6" fill="#1a1a1a" transform="translate(401.3,334) rotate(-90) scale(0.93,1)">01/11/2015</text><text font-family="Liberation Sans" font-size="6.6" fill="#1a1a1a" transform="translate(428.0,334) rotate(-90) scale(0.93,1)">01/09/2016</text><text font-family="Liberation Sans" font-size="6.6" fill="#1a1a1a" transform="translate(454.7,334) rotate(-90) scale(0.93,1)">01/07/2017</text><text font-family="Liberation Sans" font-size="6.6" fill="#1a1a1a" transform="translate(481.4,334) rotate(-90) scale(0.93,1)">01/05/2018</text><text font-family="Liberation Sans" font-size="6.6" fill="#1a1a1a" transform="translate(508.1,334) rotate(-90) scale(0.93,1)">01/03/2019</text><text font-family="Liberation Sans" font-size="6.6" fill="#1a1a1a" transform="translate(534.8,334) rotate(-90) scale(0.93,1)">01/01/2020</text><text font-family="Liberation Sans" font-size="6.6" fill="#1a1a1a" transform="translate(561.5,334) rotate(-90) scale(0.93,1)">01/11/2020</text><text font-family="Liberation Sans" font-size="6.6" fill="#1a1a1a" transform="translate(588.2,334) rotate(-90) scale(0.93,1)">01/09/2021</text><polyline points="212.0,285.7 219.4,278.7 227.7,290.1 243.1,275.7 251.4,276.6 256.6,260.4 262.7,258.4 271.5,259.5 281.1,259.5 291.6,252.9 299.5,257.3 308.2,253.4 315.2,253.4 323.1,255.6 329.2,253.8 336.2,255.6 352.7,255.4 361,244.7 374.1,253.4 381.6,252.6 387.7,245.8 394.7,248.2 405.2,256.1 413.5,250.5 418.7,253.2 424.4,251.7 427,247.3 434,244.7 438,245.3 442.8,241.6 448.5,242.5 455.9,240.6 459,235.7 464.7,236.6 473.9,234.4 483.7,237.5 490.7,233.7 496.9,235.4 501.2,235.4 509.1,236.5 514.8,227.7 524.9,230.5 530.6,228.6 536.2,231.2 541.5,235.2 546.7,225.8 557.7,227.6 562.5,212.9 570.6,211.1 578.3,193.1 582.6,190.4 589.5,190.4 591.7,187.2 597.3,183.8" fill="none" stroke="#9090fa" stroke-width="2.2" stroke-linejoin="round" stroke-linecap="round"/></svg>
<div class="abs" style="left:665px;top:206px;width:413px;height:21px;background:#64dcfa"></div>
<div class="t" style="left:667.20px;top:207.78px;font-size:15.5px;font-weight:bold;font-style:normal;color:#2a2a2a;transform:scaleX(0.9491);transform-origin:0 0;">DEFENITIF</div>
<div class="abs" style="left:665px;top:234px;width:413px;height:107px;border:1px solid #222;border-radius:6px"></div>
<div class="t" style="left:691.40px;top:259.74px;font-size:12px;font-weight:bold;font-style:normal;color:#333;transform:scaleX(0.9906);transform-origin:0 0;">Periode</div>
<div class="abs" style="left:756px;top:251px;width:86px;height:30px;background:#fffbe8;border:1px solid #c8c8c8"></div>
<div class="abs" style="left:769px;top:257px;width:53px;height:19px;background:#0a70d4"></div>
<div class="t" style="left:769.50px;top:258.95px;font-size:14px;font-weight:bold;font-style:normal;color:#fff;">10/2021</div>
<div class="abs" style="left:821px;top:257px;width:1px;height:19px;background:#e07010"></div>
<svg class="abs" style="left:826px;top:258px" width="15" height="17"><rect x="0.5" y="2.5" width="13" height="13" fill="#eef2fa" stroke="#8aa0c8" stroke-width="1"/><g fill="#8aa0c8"><rect x="2" y="6" width="2" height="2"/><rect x="5" y="6" width="2" height="2"/><rect x="8" y="6" width="2" height="2"/><rect x="11" y="6" width="1.5" height="2"/><rect x="2" y="9" width="2" height="2"/><rect x="5" y="9" width="2" height="2"/><rect x="8" y="9" width="2" height="2"/><rect x="2" y="12" width="2" height="2"/><rect x="5" y="12" width="2" height="2"/></g><rect x="3" y="0.5" width="1.5" height="3" fill="#8aa0c8"/><rect x="9" y="0.5" width="1.5" height="3" fill="#8aa0c8"/></svg>
<svg class="abs" style="left:843px;top:249px" width="18" height="32"><rect x="1" y="1" width="16" height="30" fill="#f4f4f4" stroke="#14148a" stroke-width="1.3"/><line x1="1" y1="16" x2="17" y2="16" stroke="#1a1a80" stroke-width="1.2"/><path d="M4 12L9 6.5L14 12Z" fill="#222"/><path d="M4 19.5L9 25L14 19.5Z" fill="#222"/></svg>
<div class="t" style="left:873.80px;top:259.47px;font-size:12.2px;font-weight:bold;font-style:normal;color:#333;">Valeur Bareme</div>
<div class="abs" style="left:971px;top:251px;width:77px;height:30px;background:#fffbe8;border:1px solid #c8c8c8"></div>
<div class="t" style="left:1009.72px;top:258.73px;font-size:14.5px;font-weight:bold;font-style:normal;color:#2a2a2a;transform:scaleX(0.9757);transform-origin:100% 0;">225,5</div>
<div class="abs" style="left:755px;top:296px;width:294px;height:37px;background:#00b8d4;border-radius:8px"></div>
<div class="t" style="left:855.40px;top:307.06px;font-size:14.7px;font-weight:bold;font-style:normal;color:#fff;transform:scaleX(1.0088);transform-origin:0 0;">Appliquer</div>
<svg class="abs" style="left:1026px;top:309px" width="16" height="10"><path d="M1.5 1.5L8 8L14.5 1.5" stroke="#fff" stroke-width="2.4" fill="none"/></svg>
<div class="abs" style="left:194px;top:348px;width:891px;height:38px;background:#030303"></div>
<div class="abs" style="left:992px;top:348px;width:76px;height:38px;background:#00bcd4"></div>
<svg class="abs" style="left:1073px;top:361px" width="8" height="11"><path d="M1.2 1L5.8 5.5L1.2 10" stroke="#eee" stroke-width="1" fill="none"/></svg>
<div class="t" style="left:214.63px;top:360.74px;font-size:12px;font-weight:bold;font-style:normal;color:#fff;transform:scaleX(0.9805);transform-origin:50% 0;">Mois</div>
<div class="t" style="left:276.15px;top:360.74px;font-size:12px;font-weight:bold;font-style:normal;color:#fff;">2010</div>
<div class="t" style="left:328.48px;top:360.74px;font-size:12px;font-weight:bold;font-style:normal;color:#fff;">2011</div>
<div class="t" style="left:380.15px;top:360.74px;font-size:12px;font-weight:bold;font-style:normal;color:#fff;">2012</div>
<div class="t" style="left:432.15px;top:360.74px;font-size:12px;font-weight:bold;font-style:normal;color:#fff;">2013</div>
<div class="t" style="left:484.15px;top:360.74px;font-size:12px;font-weight:bold;font-style:normal;color:#fff;">2014</div>
<div class="t" style="left:536.15px;top:360.74px;font-size:12px;font-weight:bold;font-style:normal;color:#fff;">2015</div>
<div class="t" style="left:588.15px;top:360.74px;font-size:12px;font-weight:bold;font-style:normal;color:#fff;">2016</div>
<div class="t" style="left:640.15px;top:360.74px;font-size:12px;font-weight:bold;font-style:normal;color:#fff;">2017</div>
<div class="t" style="left:692.15px;top:360.74px;font-size:12px;font-weight:bold;font-style:normal;color:#fff;">2018</div>
<div class="t" style="left:744.15px;top:360.74px;font-size:12px;font-weight:bold;font-style:normal;color:#fff;">2019</div>
<div class="t" style="left:796.15px;top:360.74px;font-size:12px;font-weight:bold;font-style:normal;color:#fff;">2020</div>
<div class="t" style="left:848.15px;top:360.74px;font-size:12px;font-weight:bold;font-style:normal;color:#fff;">2021</div>
<div class="t" style="left:900.15px;top:360.74px;font-size:12px;font-weight:bold;font-style:normal;color:#fff;">2022</div>
<div class="t" style="left:952.15px;top:360.74px;font-size:12px;font-weight:bold;font-style:normal;color:#fff;">2023</div>
<div class="abs" style="left:991px;top:386px;width:77px;height:367px;background:#fff"></div>
<div class="abs" style="left:1068px;top:386px;width:17px;height:367px;background:#f8f8f8"></div>
<div class="abs" style="left:1085px;top:386px;width:1px;height:367px;background:#e6e6e6"></div>
<div class="abs" style="left:194px;top:386px;width:797px;height:29px;background:#ffffff"></div>
<div class="dot" style="left:194px;top:415px;width:797px;background:repeating-linear-gradient(90deg,#6a6a6a 0 1px,transparent 1px 2px)"></div>
<div class="t" style="left:199.20px;top:395.59px;font-size:12.3px;font-weight:bold;font-style:normal;color:#333;transform:scaleX(0.8705);transform-origin:0 0;">Janvier</div>
<div class="t" style="left:282.53px;top:396.43px;font-size:11.3px;font-weight:bold;font-style:normal;color:#333;transform:scaleX(0.7852);transform-origin:100% 0;">185,1</div>
<div class="t" style="left:334.53px;top:396.43px;font-size:11.3px;font-weight:bold;font-style:normal;color:#333;transform:scaleX(0.7852);transform-origin:100% 0;">189,6</div>
<div class="t" style="left:386.53px;top:396.43px;font-size:11.3px;font-weight:bold;font-style:normal;color:#333;transform:scaleX(0.7852);transform-origin:100% 0;">196,8</div>
<div class="t" style="left:438.53px;top:396.43px;font-size:11.3px;font-weight:bold;font-style:normal;color:#333;transform:scaleX(0.7852);transform-origin:100% 0;">198,9</div>
<div class="t" style="left:490.53px;top:396.43px;font-size:11.3px;font-weight:bold;font-style:normal;color:#333;transform:scaleX(0.7852);transform-origin:100% 0;">198,1</div>
<div class="t" style="left:542.53px;top:396.43px;font-size:11.3px;font-weight:bold;font-style:normal;color:#333;transform:scaleX(0.7852);transform-origin:100% 0;">199,8</div>
<div class="t" style="left:594.53px;top:396.43px;font-size:11.3px;font-weight:bold;font-style:normal;color:#333;transform:scaleX(0.7852);transform-origin:100% 0;">198,4</div>
<div class="t" style="left:646.53px;top:396.43px;font-size:11.3px;font-weight:bold;font-style:normal;color:#333;transform:scaleX(0.7852);transform-origin:100% 0;">202,9</div>
<div class="t" style="left:698.53px;top:396.43px;font-size:11.3px;font-weight:bold;font-style:normal;color:#333;transform:scaleX(0.7852);transform-origin:100% 0;">207,0</div>
<div class="t" style="left:750.53px;top:396.43px;font-size:11.3px;font-weight:bold;font-style:normal;color:#333;transform:scaleX(0.7852);transform-origin:100% 0;">206,7</div>
<div class="t" style="left:802.53px;top:396.43px;font-size:11.3px;font-weight:bold;font-style:normal;color:#333;transform:scaleX(0.7852);transform-origin:100% 0;">209,6</div>
<div class="t" style="left:854.53px;top:396.43px;font-size:11.3px;font-weight:bold;font-style:normal;color:#333;transform:scaleX(0.7852);transform-origin:100% 0;">216,4</div>
<div class="abs" style="left:888px;top:386px;width:51px;height:29px;background:#ffff66"></div>
<div class="t" style="left:906.53px;top:396.43px;font-size:11.3px;font-weight:bold;font-style:normal;color:#333;transform:scaleX(0.7852);transform-origin:100% 0;">228,0</div>
<div class="t" style="left:971.09px;top:396.43px;font-size:11.3px;font-weight:bold;font-style:normal;color:#333;transform:scaleX(0.7852);transform-origin:100% 0;">0,0</div>
<div class="abs" style="left:194px;top:416px;width:797px;height:29px;background:#f7f7f7"></div>
<div class="dot" style="left:194px;top:445px;width:797px;background:repeating-linear-gradient(90deg,#6a6a6a 0 1px,transparent 1px 2px)"></div>
<div class="t" style="left:199.20px;top:425.59px;font-size:12.3px;font-weight:bold;font-style:normal;color:#333;transform:scaleX(0.8705);transform-origin:0 0;">Février</div>
<div class="t" style="left:282.53px;top:426.43px;font-size:11.3px;font-weight:normal;font-style:normal;color:#333;transform:scaleX(0.7852);transform-origin:100% 0;">185,7</div>
<div class="t" style="left:334.53px;top:426.43px;font-size:11.3px;font-weight:normal;font-style:normal;color:#333;transform:scaleX(0.7852);transform-origin:100% 0;">190,3</div>
<div class="t" style="left:386.53px;top:426.43px;font-size:11.3px;font-weight:normal;font-style:normal;color:#333;transform:scaleX(0.7852);transform-origin:100% 0;">197,2</div>
<div class="t" style="left:438.53px;top:426.43px;font-size:11.3px;font-weight:normal;font-style:normal;color:#333;transform:scaleX(0.7852);transform-origin:100% 0;">199,0</div>
<div class="t" style="left:490.53px;top:426.43px;font-size:11.3px;font-weight:normal;font-style:normal;color:#333;transform:scaleX(0.7852);transform-origin:100% 0;">198,2</div>
<div class="t" style="left:542.53px;top:426.43px;font-size:11.3px;font-weight:normal;font-style:normal;color:#333;transform:scaleX(0.7852);transform-origin:100% 0;">199,1</div>
<div class="t" style="left:594.53px;top:426.43px;font-size:11.3px;font-weight:normal;font-style:normal;color:#333;transform:scaleX(0.7852);transform-origin:100% 0;">198,0</div>
<div class="t" style="left:646.53px;top:426.43px;font-size:11.3px;font-weight:normal;font-style:normal;color:#333;transform:scaleX(0.7852);transform-origin:100% 0;">202,7</div>
<div class="t" style="left:698.53px;top:426.43px;font-size:11.3px;font-weight:normal;font-style:normal;color:#333;transform:scaleX(0.7852);transform-origin:100% 0;">206,9</div>
<div class="t" style="left:750.53px;top:426.43px;font-size:11.3px;font-weight:normal;font-style:normal;color:#333;transform:scaleX(0.7852);transform-origin:100% 0;">206,6</div>
<div class="t" style="left:802.53px;top:426.43px;font-size:11.3px;font-weight:normal;font-style:normal;color:#333;transform:scaleX(0.7852);transform-origin:100% 0;">209,0</div>
<div class="t" style="left:854.53px;top:426.43px;font-size:11.3px;font-weight:normal;font-style:normal;color:#333;transform:scaleX(0.7852);transform-origin:100% 0;">216,6</div>
<div class="abs" style="left:888px;top:416px;width:51px;height:29px;background:#ffff66"></div>
<div class="t" style="left:906.53px;top:426.43px;font-size:11.3px;font-weight:normal;font-style:normal;color:#333;transform:scaleX(0.7852);transform-origin:100% 0;">229,1</div>
<div class="t" style="left:971.09px;top:426.43px;font-size:11.3px;font-weight:normal;font-style:normal;color:#333;transform:scaleX(0.7852);transform-origin:100% 0;">0,0</div>
<div class="abs" style="left:194px;top:446px;width:797px;height:29px;background:#ffffff"></div>
<div class="dot" style="left:194px;top:475px;width:797px;background:repeating-linear-gradient(90deg,#6a6a6a 0 1px,transparent 1px 2px)"></div>
<div class="t" style="left:199.20px;top:455.59px;font-size:12.3px;font-weight:bold;font-style:normal;color:#333;transform:scaleX(0.8705);transform-origin:0 0;">Mars</div>
<div class="t" style="left:282.53px;top:456.43px;font-size:11.3px;font-weight:normal;font-style:normal;color:#333;transform:scaleX(0.7852);transform-origin:100% 0;">185,8</div>
<div class="t" style="left:334.53px;top:456.43px;font-size:11.3px;font-weight:normal;font-style:normal;color:#333;transform:scaleX(0.7852);transform-origin:100% 0;">189,5</div>
<div class="t" style="left:386.53px;top:456.43px;font-size:11.3px;font-weight:normal;font-style:normal;color:#333;transform:scaleX(0.7852);transform-origin:100% 0;">196,7</div>
<div class="t" style="left:438.53px;top:456.43px;font-size:11.3px;font-weight:normal;font-style:normal;color:#333;transform:scaleX(0.7852);transform-origin:100% 0;">199,0</div>
<div class="t" style="left:490.53px;top:456.43px;font-size:11.3px;font-weight:normal;font-style:normal;color:#333;transform:scaleX(0.7852);transform-origin:100% 0;">198,2</div>
<div class="t" style="left:542.53px;top:456.43px;font-size:11.3px;font-weight:normal;font-style:normal;color:#333;transform:scaleX(0.7852);transform-origin:100% 0;">199,4</div>
<div class="t" style="left:594.53px;top:456.43px;font-size:11.3px;font-weight:normal;font-style:normal;color:#333;transform:scaleX(0.7852);transform-origin:100% 0;">198,4</div>
<div class="t" style="left:646.53px;top:456.43px;font-size:11.3px;font-weight:normal;font-style:normal;color:#333;transform:scaleX(0.7852);transform-origin:100% 0;">203,1</div>
<div class="t" style="left:698.53px;top:456.43px;font-size:11.3px;font-weight:normal;font-style:normal;color:#333;transform:scaleX(0.7852);transform-origin:100% 0;">206,8</div>
<div class="t" style="left:750.53px;top:456.43px;font-size:11.3px;font-weight:normal;font-style:normal;color:#333;transform:scaleX(0.7852);transform-origin:100% 0;">206,7</div>
<div class="t" style="left:802.53px;top:456.43px;font-size:11.3px;font-weight:normal;font-style:normal;color:#333;transform:scaleX(0.7852);transform-origin:100% 0;">208,6</div>
<div class="t" style="left:854.53px;top:456.43px;font-size:11.3px;font-weight:normal;font-style:normal;color:#333;transform:scaleX(0.7852);transform-origin:100% 0;">217,0</div>
<div class="t" style="left:919.09px;top:456.43px;font-size:11.3px;font-weight:normal;font-style:normal;color:#333;transform:scaleX(0.7852);transform-origin:100% 0;">0,0</div>
<div class="t" style="left:971.09px;top:456.43px;font-size:11.3px;font-weight:normal;font-style:normal;color:#333;transform:scaleX(0.7852);transform-origin:100% 0;">0,0</div>
<div class="abs" style="left:194px;top:476px;width:797px;height:29px;background:#f7f7f7"></div>
<div class="dot" style="left:194px;top:505px;width:797px;background:repeating-linear-gradient(90deg,#6a6a6a 0 1px,transparent 1px 2px)"></div>
<div class="t" style="left:199.20px;top:485.59px;font-size:12.3px;font-weight:bold;font-style:normal;color:#333;transform:scaleX(0.8705);transform-origin:0 0;">Avril</div>
<div class="t" style="left:282.53px;top:486.43px;font-size:11.3px;font-weight:normal;font-style:normal;color:#333;transform:scaleX(0.7852);transform-origin:100% 0;">188,5</div>
<div class="t" style="left:334.53px;top:486.43px;font-size:11.3px;font-weight:normal;font-style:normal;color:#333;transform:scaleX(0.7852);transform-origin:100% 0;">189,4</div>
<div class="t" style="left:386.53px;top:486.43px;font-size:11.3px;font-weight:normal;font-style:normal;color:#333;transform:scaleX(0.7852);transform-origin:100% 0;">196,8</div>
<div class="t" style="left:438.53px;top:486.43px;font-size:11.3px;font-weight:normal;font-style:normal;color:#333;transform:scaleX(0.7852);transform-origin:100% 0;">199,0</div>
<div class="t" style="left:490.53px;top:486.43px;font-size:11.3px;font-weight:normal;font-style:normal;color:#333;transform:scaleX(0.7852);transform-origin:100% 0;">198,2</div>
<div class="t" style="left:542.53px;top:486.43px;font-size:11.3px;font-weight:normal;font-style:normal;color:#333;transform:scaleX(0.7852);transform-origin:100% 0;">199,7</div>
<div class="t" style="left:594.53px;top:486.43px;font-size:11.3px;font-weight:normal;font-style:normal;color:#333;transform:scaleX(0.7852);transform-origin:100% 0;">198,5</div>
<div class="t" style="left:646.53px;top:486.43px;font-size:11.3px;font-weight:normal;font-style:normal;color:#333;transform:scaleX(0.7852);transform-origin:100% 0;">204,4</div>
<div class="t" style="left:698.53px;top:486.43px;font-size:11.3px;font-weight:normal;font-style:normal;color:#333;transform:scaleX(0.7852);transform-origin:100% 0;">207,2</div>
<div class="t" style="left:750.53px;top:486.43px;font-size:11.3px;font-weight:normal;font-style:normal;color:#333;transform:scaleX(0.7852);transform-origin:100% 0;">206,7</div>
<div class="t" style="left:802.53px;top:486.43px;font-size:11.3px;font-weight:normal;font-style:normal;color:#333;transform:scaleX(0.7852);transform-origin:100% 0;">207,6</div>
<div class="t" style="left:854.53px;top:486.43px;font-size:11.3px;font-weight:normal;font-style:normal;color:#333;transform:scaleX(0.7852);transform-origin:100% 0;">216,9</div>
<div class="t" style="left:919.09px;top:486.43px;font-size:11.3px;font-weight:normal;font-style:normal;color:#333;transform:scaleX(0.7852);transform-origin:100% 0;">0,0</div>
<div class="t" style="left:971.09px;top:486.43px;font-size:11.3px;font-weight:normal;font-style:normal;color:#333;transform:scaleX(0.7852);transform-origin:100% 0;">0,0</div>
<div class="abs" style="left:194px;top:506px;width:797px;height:29px;background:#ffffff"></div>
<div class="dot" style="left:194px;top:535px;width:797px;background:repeating-linear-gradient(90deg,#6a6a6a 0 1px,transparent 1px 2px)"></div>
<div class="t" style="left:199.20px;top:515.59px;font-size:12.3px;font-weight:bold;font-style:normal;color:#333;transform:scaleX(0.8705);transform-origin:0 0;">Mai</div>
<div class="t" style="left:282.53px;top:516.43px;font-size:11.3px;font-weight:normal;font-style:normal;color:#333;transform:scaleX(0.7852);transform-origin:100% 0;">189,6</div>
<div class="t" style="left:334.53px;top:516.43px;font-size:11.3px;font-weight:normal;font-style:normal;color:#333;transform:scaleX(0.7852);transform-origin:100% 0;">189,4</div>
<div class="t" style="left:386.53px;top:516.43px;font-size:11.3px;font-weight:normal;font-style:normal;color:#333;transform:scaleX(0.7852);transform-origin:100% 0;">196,4</div>
<div class="t" style="left:438.53px;top:516.43px;font-size:11.3px;font-weight:normal;font-style:normal;color:#333;transform:scaleX(0.7852);transform-origin:100% 0;">198,8</div>
<div class="t" style="left:490.53px;top:516.43px;font-size:11.3px;font-weight:normal;font-style:normal;color:#333;transform:scaleX(0.7852);transform-origin:100% 0;">198,3</div>
<div class="t" style="left:542.53px;top:516.43px;font-size:11.3px;font-weight:normal;font-style:normal;color:#333;transform:scaleX(0.7852);transform-origin:100% 0;">199,7</div>
<div class="t" style="left:594.53px;top:516.43px;font-size:11.3px;font-weight:normal;font-style:normal;color:#333;transform:scaleX(0.7852);transform-origin:100% 0;">200,3</div>
<div class="t" style="left:646.53px;top:516.43px;font-size:11.3px;font-weight:normal;font-style:normal;color:#333;transform:scaleX(0.7852);transform-origin:100% 0;">204,3</div>
<div class="t" style="left:698.53px;top:516.43px;font-size:11.3px;font-weight:normal;font-style:normal;color:#333;transform:scaleX(0.7852);transform-origin:100% 0;">206,4</div>
<div class="t" style="left:750.53px;top:516.43px;font-size:11.3px;font-weight:normal;font-style:normal;color:#333;transform:scaleX(0.7852);transform-origin:100% 0;">206,5</div>
<div class="t" style="left:802.53px;top:516.43px;font-size:11.3px;font-weight:normal;font-style:normal;color:#333;transform:scaleX(0.7852);transform-origin:100% 0;">207,0</div>
<div class="t" style="left:854.53px;top:516.43px;font-size:11.3px;font-weight:normal;font-style:normal;color:#333;transform:scaleX(0.7852);transform-origin:100% 0;">220,0</div>
<div class="t" style="left:919.09px;top:516.43px;font-size:11.3px;font-weight:normal;font-style:normal;color:#333;transform:scaleX(0.7852);transform-origin:100% 0;">0,0</div>
<div class="t" style="left:971.09px;top:516.43px;font-size:11.3px;font-weight:normal;font-style:normal;color:#333;transform:scaleX(0.7852);transform-origin:100% 0;">0,0</div>
<div class="abs" style="left:194px;top:536px;width:797px;height:29px;background:#f7f7f7"></div>
<div class="dot" style="left:194px;top:565px;width:797px;background:repeating-linear-gradient(90deg,#6a6a6a 0 1px,transparent 1px 2px)"></div>
<div class="t" style="left:199.20px;top:545.59px;font-size:12.3px;font-weight:bold;font-style:normal;color:#333;transform:scaleX(0.8705);transform-origin:0 0;">Juin</div>
<div class="t" style="left:282.53px;top:546.43px;font-size:11.3px;font-weight:normal;font-style:normal;color:#333;transform:scaleX(0.7852);transform-origin:100% 0;">186,2</div>
<div class="t" style="left:334.53px;top:546.43px;font-size:11.3px;font-weight:normal;font-style:normal;color:#333;transform:scaleX(0.7852);transform-origin:100% 0;">196,0</div>
<div class="t" style="left:386.53px;top:546.43px;font-size:11.3px;font-weight:normal;font-style:normal;color:#333;transform:scaleX(0.7852);transform-origin:100% 0;">197,0</div>
<div class="t" style="left:438.53px;top:546.43px;font-size:11.3px;font-weight:normal;font-style:normal;color:#333;transform:scaleX(0.7852);transform-origin:100% 0;">198,5</div>
<div class="t" style="left:490.53px;top:546.43px;font-size:11.3px;font-weight:normal;font-style:normal;color:#333;transform:scaleX(0.7852);transform-origin:100% 0;">198,1</div>
<div class="t" style="left:542.53px;top:546.43px;font-size:11.3px;font-weight:normal;font-style:normal;color:#333;transform:scaleX(0.7852);transform-origin:100% 0;">199,5</div>
<div class="t" style="left:594.53px;top:546.43px;font-size:11.3px;font-weight:normal;font-style:normal;color:#333;transform:scaleX(0.7852);transform-origin:100% 0;">200,7</div>
<div class="t" style="left:646.53px;top:546.43px;font-size:11.3px;font-weight:normal;font-style:normal;color:#333;transform:scaleX(0.7852);transform-origin:100% 0;">204,0</div>
<div class="t" style="left:698.53px;top:546.43px;font-size:11.3px;font-weight:normal;font-style:normal;color:#333;transform:scaleX(0.7852);transform-origin:100% 0;">206,3</div>
<div class="t" style="left:750.53px;top:546.43px;font-size:11.3px;font-weight:normal;font-style:normal;color:#333;transform:scaleX(0.7852);transform-origin:100% 0;">206,4</div>
<div class="t" style="left:802.53px;top:546.43px;font-size:11.3px;font-weight:normal;font-style:normal;color:#333;transform:scaleX(0.7852);transform-origin:100% 0;">206,9</div>
<div class="t" style="left:854.53px;top:546.43px;font-size:11.3px;font-weight:normal;font-style:normal;color:#333;transform:scaleX(0.7852);transform-origin:100% 0;">221,6</div>
<div class="t" style="left:919.09px;top:546.43px;font-size:11.3px;font-weight:normal;font-style:normal;color:#333;transform:scaleX(0.7852);transform-origin:100% 0;">0,0</div>
<div class="t" style="left:971.09px;top:546.43px;font-size:11.3px;font-weight:normal;font-style:normal;color:#333;transform:scaleX(0.7852);transform-origin:100% 0;">0,0</div>
<div class="abs" style="left:194px;top:566px;width:797px;height:29px;background:#ffffff"></div>
<div class="dot" style="left:194px;top:595px;width:797px;background:repeating-linear-gradient(90deg,#6a6a6a 0 1px,transparent 1px 2px)"></div>
<div class="t" style="left:199.20px;top:575.59px;font-size:12.3px;font-weight:bold;font-style:normal;color:#333;transform:scaleX(0.8705);transform-origin:0 0;">Juillet</div>
<div class="t" style="left:282.53px;top:576.43px;font-size:11.3px;font-weight:normal;font-style:normal;color:#333;transform:scaleX(0.7852);transform-origin:100% 0;">183,2</div>
<div class="t" style="left:334.53px;top:576.43px;font-size:11.3px;font-weight:normal;font-style:normal;color:#333;transform:scaleX(0.7852);transform-origin:100% 0;">196,8</div>
<div class="t" style="left:386.53px;top:576.43px;font-size:11.3px;font-weight:normal;font-style:normal;color:#333;transform:scaleX(0.7852);transform-origin:100% 0;">199,7</div>
<div class="t" style="left:438.53px;top:576.43px;font-size:11.3px;font-weight:normal;font-style:normal;color:#333;transform:scaleX(0.7852);transform-origin:100% 0;">198,1</div>
<div class="t" style="left:490.53px;top:576.43px;font-size:11.3px;font-weight:normal;font-style:normal;color:#333;transform:scaleX(0.7852);transform-origin:100% 0;">201,7</div>
<div class="t" style="left:542.53px;top:576.43px;font-size:11.3px;font-weight:normal;font-style:normal;color:#333;transform:scaleX(0.7852);transform-origin:100% 0;">202,7</div>
<div class="t" style="left:594.53px;top:576.43px;font-size:11.3px;font-weight:normal;font-style:normal;color:#333;transform:scaleX(0.7852);transform-origin:100% 0;">199,2</div>
<div class="t" style="left:646.53px;top:576.43px;font-size:11.3px;font-weight:normal;font-style:normal;color:#333;transform:scaleX(0.7852);transform-origin:100% 0;">204,1</div>
<div class="t" style="left:698.53px;top:576.43px;font-size:11.3px;font-weight:normal;font-style:normal;color:#333;transform:scaleX(0.7852);transform-origin:100% 0;">206,1</div>
<div class="t" style="left:750.53px;top:576.43px;font-size:11.3px;font-weight:normal;font-style:normal;color:#333;transform:scaleX(0.7852);transform-origin:100% 0;">210,1</div>
<div class="t" style="left:803.36px;top:576.43px;font-size:11.3px;font-weight:normal;font-style:normal;color:#333;transform:scaleX(0.7852);transform-origin:100% 0;">211,1</div>
<div class="t" style="left:854.53px;top:576.43px;font-size:11.3px;font-weight:normal;font-style:normal;color:#333;transform:scaleX(0.7852);transform-origin:100% 0;">225,1</div>
<div class="t" style="left:919.09px;top:576.43px;font-size:11.3px;font-weight:normal;font-style:normal;color:#333;transform:scaleX(0.7852);transform-origin:100% 0;">0,0</div>
<div class="t" style="left:971.09px;top:576.43px;font-size:11.3px;font-weight:normal;font-style:normal;color:#333;transform:scaleX(0.7852);transform-origin:100% 0;">0,0</div>
<div class="abs" style="left:194px;top:596px;width:797px;height:29px;background:#f7f7f7"></div>
<div class="dot" style="left:194px;top:625px;width:797px;background:repeating-linear-gradient(90deg,#6a6a6a 0 1px,transparent 1px 2px)"></div>
<div class="t" style="left:199.20px;top:605.59px;font-size:12.3px;font-weight:bold;font-style:normal;color:#333;transform:scaleX(0.8705);transform-origin:0 0;">Aout</div>
<div class="t" style="left:282.53px;top:606.43px;font-size:11.3px;font-weight:normal;font-style:normal;color:#333;transform:scaleX(0.7852);transform-origin:100% 0;">184,0</div>
<div class="t" style="left:334.53px;top:606.43px;font-size:11.3px;font-weight:normal;font-style:normal;color:#333;transform:scaleX(0.7852);transform-origin:100% 0;">197,0</div>
<div class="t" style="left:386.53px;top:606.43px;font-size:11.3px;font-weight:normal;font-style:normal;color:#333;transform:scaleX(0.7852);transform-origin:100% 0;">199,4</div>
<div class="t" style="left:438.53px;top:606.43px;font-size:11.3px;font-weight:normal;font-style:normal;color:#333;transform:scaleX(0.7852);transform-origin:100% 0;">197,9</div>
<div class="t" style="left:490.53px;top:606.43px;font-size:11.3px;font-weight:normal;font-style:normal;color:#333;transform:scaleX(0.7852);transform-origin:100% 0;">201,5</div>
<div class="t" style="left:542.53px;top:606.43px;font-size:11.3px;font-weight:normal;font-style:normal;color:#333;transform:scaleX(0.7852);transform-origin:100% 0;">202,1</div>
<div class="t" style="left:594.53px;top:606.43px;font-size:11.3px;font-weight:normal;font-style:normal;color:#333;transform:scaleX(0.7852);transform-origin:100% 0;">199,9</div>
<div class="t" style="left:646.53px;top:606.43px;font-size:11.3px;font-weight:normal;font-style:normal;color:#333;transform:scaleX(0.7852);transform-origin:100% 0;">204,2</div>
<div class="t" style="left:698.53px;top:606.43px;font-size:11.3px;font-weight:normal;font-style:normal;color:#333;transform:scaleX(0.7852);transform-origin:100% 0;">206,1</div>
<div class="t" style="left:750.53px;top:606.43px;font-size:11.3px;font-weight:normal;font-style:normal;color:#333;transform:scaleX(0.7852);transform-origin:100% 0;">209,7</div>
<div class="t" style="left:803.36px;top:606.43px;font-size:11.3px;font-weight:normal;font-style:normal;color:#333;transform:scaleX(0.7852);transform-origin:100% 0;">211,0</div>
<div class="t" style="left:854.53px;top:606.43px;font-size:11.3px;font-weight:normal;font-style:normal;color:#333;transform:scaleX(0.7852);transform-origin:100% 0;">225,9</div>
<div class="t" style="left:919.09px;top:606.43px;font-size:11.3px;font-weight:normal;font-style:normal;color:#333;transform:scaleX(0.7852);transform-origin:100% 0;">0,0</div>
<div class="t" style="left:971.09px;top:606.43px;font-size:11.3px;font-weight:normal;font-style:normal;color:#333;transform:scaleX(0.7852);transform-origin:100% 0;">0,0</div>
<div class="abs" style="left:194px;top:626px;width:797px;height:29px;background:#ffffff"></div>
<div class="dot" style="left:194px;top:655px;width:797px;background:repeating-linear-gradient(90deg,#6a6a6a 0 1px,transparent 1px 2px)"></div>
<div class="t" style="left:199.20px;top:635.59px;font-size:12.3px;font-weight:bold;font-style:normal;color:#333;transform:scaleX(0.8705);transform-origin:0 0;">Septembre</div>
<div class="t" style="left:282.53px;top:636.43px;font-size:11.3px;font-weight:normal;font-style:normal;color:#333;transform:scaleX(0.7852);transform-origin:100% 0;">185,1</div>
<div class="t" style="left:334.53px;top:636.43px;font-size:11.3px;font-weight:normal;font-style:normal;color:#333;transform:scaleX(0.7852);transform-origin:100% 0;">197,0</div>
<div class="t" style="left:386.53px;top:636.43px;font-size:11.3px;font-weight:normal;font-style:normal;color:#333;transform:scaleX(0.7852);transform-origin:100% 0;">199,1</div>
<div class="t" style="left:438.53px;top:636.43px;font-size:11.3px;font-weight:normal;font-style:normal;color:#333;transform:scaleX(0.7852);transform-origin:100% 0;">199,0</div>
<div class="t" style="left:490.53px;top:636.43px;font-size:11.3px;font-weight:normal;font-style:normal;color:#333;transform:scaleX(0.7852);transform-origin:100% 0;">203,0</div>
<div class="t" style="left:542.53px;top:636.43px;font-size:11.3px;font-weight:normal;font-style:normal;color:#333;transform:scaleX(0.7852);transform-origin:100% 0;">201,5</div>
<div class="t" style="left:594.53px;top:636.43px;font-size:11.3px;font-weight:normal;font-style:normal;color:#333;transform:scaleX(0.7852);transform-origin:100% 0;">199,9</div>
<div class="t" style="left:646.53px;top:636.43px;font-size:11.3px;font-weight:normal;font-style:normal;color:#333;transform:scaleX(0.7852);transform-origin:100% 0;">204,8</div>
<div class="t" style="left:698.53px;top:636.43px;font-size:11.3px;font-weight:normal;font-style:normal;color:#333;transform:scaleX(0.7852);transform-origin:100% 0;">207,8</div>
<div class="t" style="left:750.53px;top:636.43px;font-size:11.3px;font-weight:normal;font-style:normal;color:#333;transform:scaleX(0.7852);transform-origin:100% 0;">209,3</div>
<div class="t" style="left:802.53px;top:636.43px;font-size:11.3px;font-weight:normal;font-style:normal;color:#333;transform:scaleX(0.7852);transform-origin:100% 0;">210,6</div>
<div class="t" style="left:854.53px;top:636.43px;font-size:11.3px;font-weight:normal;font-style:normal;color:#333;transform:scaleX(0.7852);transform-origin:100% 0;">225,4</div>
<div class="t" style="left:919.09px;top:636.43px;font-size:11.3px;font-weight:normal;font-style:normal;color:#333;transform:scaleX(0.7852);transform-origin:100% 0;">0,0</div>
<div class="t" style="left:971.09px;top:636.43px;font-size:11.3px;font-weight:normal;font-style:normal;color:#333;transform:scaleX(0.7852);transform-origin:100% 0;">0,0</div>
<div class="abs" style="left:194px;top:656px;width:797px;height:29px;background:#f7f7f7"></div>
<div class="dot" style="left:194px;top:685px;width:797px;background:repeating-linear-gradient(90deg,#6a6a6a 0 1px,transparent 1px 2px)"></div>
<div class="t" style="left:199.20px;top:665.59px;font-size:12.3px;font-weight:bold;font-style:normal;color:#333;transform:scaleX(0.8705);transform-origin:0 0;">Octobre</div>
<div class="t" style="left:282.53px;top:666.43px;font-size:11.3px;font-weight:normal;font-style:normal;color:#333;transform:scaleX(0.7852);transform-origin:100% 0;">185,4</div>
<div class="t" style="left:334.53px;top:666.43px;font-size:11.3px;font-weight:normal;font-style:normal;color:#333;transform:scaleX(0.7852);transform-origin:100% 0;">196,8</div>
<div class="t" style="left:386.53px;top:666.43px;font-size:11.3px;font-weight:normal;font-style:normal;color:#333;transform:scaleX(0.7852);transform-origin:100% 0;">197,2</div>
<div class="t" style="left:438.53px;top:666.43px;font-size:11.3px;font-weight:normal;font-style:normal;color:#333;transform:scaleX(0.7852);transform-origin:100% 0;">198,7</div>
<div class="t" style="left:490.53px;top:666.43px;font-size:11.3px;font-weight:normal;font-style:normal;color:#333;transform:scaleX(0.7852);transform-origin:100% 0;">202,2</div>
<div class="t" style="left:542.53px;top:666.43px;font-size:11.3px;font-weight:normal;font-style:normal;color:#333;transform:scaleX(0.7852);transform-origin:100% 0;">201,4</div>
<div class="t" style="left:594.53px;top:666.43px;font-size:11.3px;font-weight:normal;font-style:normal;color:#333;transform:scaleX(0.7852);transform-origin:100% 0;">201,8</div>
<div class="t" style="left:646.53px;top:666.43px;font-size:11.3px;font-weight:normal;font-style:normal;color:#333;transform:scaleX(0.7852);transform-origin:100% 0;">206,6</div>
<div class="t" style="left:698.53px;top:666.43px;font-size:11.3px;font-weight:normal;font-style:normal;color:#333;transform:scaleX(0.7852);transform-origin:100% 0;">207,5</div>
<div class="t" style="left:750.53px;top:666.43px;font-size:11.3px;font-weight:normal;font-style:normal;color:#333;transform:scaleX(0.7852);transform-origin:100% 0;">209,2</div>
<div class="t" style="left:802.53px;top:666.43px;font-size:11.3px;font-weight:normal;font-style:normal;color:#333;transform:scaleX(0.7852);transform-origin:100% 0;">210,5</div>
<div class="t" style="left:854.53px;top:666.43px;font-size:11.3px;font-weight:normal;font-style:normal;color:#333;transform:scaleX(0.7852);transform-origin:100% 0;">225,5</div>
<div class="t" style="left:919.09px;top:666.43px;font-size:11.3px;font-weight:normal;font-style:normal;color:#333;transform:scaleX(0.7852);transform-origin:100% 0;">0,0</div>
<div class="t" style="left:971.09px;top:666.43px;font-size:11.3px;font-weight:normal;font-style:normal;color:#333;transform:scaleX(0.7852);transform-origin:100% 0;">0,0</div>
<div class="abs" style="left:194px;top:686px;width:797px;height:29px;background:#ffffff"></div>
<div class="dot" style="left:194px;top:715px;width:797px;background:repeating-linear-gradient(90deg,#6a6a6a 0 1px,transparent 1px 2px)"></div>
<div class="t" style="left:199.20px;top:695.59px;font-size:12.3px;font-weight:bold;font-style:normal;color:#333;transform:scaleX(0.8705);transform-origin:0 0;">Novembre</div>
<div class="t" style="left:282.53px;top:696.43px;font-size:11.3px;font-weight:normal;font-style:normal;color:#333;transform:scaleX(0.7852);transform-origin:100% 0;">185,4</div>
<div class="t" style="left:334.53px;top:696.43px;font-size:11.3px;font-weight:normal;font-style:normal;color:#333;transform:scaleX(0.7852);transform-origin:100% 0;">197,0</div>
<div class="t" style="left:386.53px;top:696.43px;font-size:11.3px;font-weight:normal;font-style:normal;color:#333;transform:scaleX(0.7852);transform-origin:100% 0;">197,7</div>
<div class="t" style="left:438.53px;top:696.43px;font-size:11.3px;font-weight:normal;font-style:normal;color:#333;transform:scaleX(0.7852);transform-origin:100% 0;">198,6</div>
<div class="t" style="left:490.53px;top:696.43px;font-size:11.3px;font-weight:normal;font-style:normal;color:#333;transform:scaleX(0.7852);transform-origin:100% 0;">201,8</div>
<div class="t" style="left:542.53px;top:696.43px;font-size:11.3px;font-weight:normal;font-style:normal;color:#333;transform:scaleX(0.7852);transform-origin:100% 0;">200,0</div>
<div class="t" style="left:594.53px;top:696.43px;font-size:11.3px;font-weight:normal;font-style:normal;color:#333;transform:scaleX(0.7852);transform-origin:100% 0;">202,0</div>
<div class="t" style="left:646.53px;top:696.43px;font-size:11.3px;font-weight:normal;font-style:normal;color:#333;transform:scaleX(0.7852);transform-origin:100% 0;">206,7</div>
<div class="t" style="left:698.53px;top:696.43px;font-size:11.3px;font-weight:normal;font-style:normal;color:#333;transform:scaleX(0.7852);transform-origin:100% 0;">207,4</div>
<div class="t" style="left:750.53px;top:696.43px;font-size:11.3px;font-weight:normal;font-style:normal;color:#333;transform:scaleX(0.7852);transform-origin:100% 0;">209,0</div>
<div class="t" style="left:802.53px;top:696.43px;font-size:11.3px;font-weight:normal;font-style:normal;color:#333;transform:scaleX(0.7852);transform-origin:100% 0;">210,3</div>
<div class="t" style="left:854.53px;top:696.43px;font-size:11.3px;font-weight:normal;font-style:normal;color:#333;transform:scaleX(0.7852);transform-origin:100% 0;">226,1</div>
<div class="t" style="left:919.09px;top:696.43px;font-size:11.3px;font-weight:normal;font-style:normal;color:#333;transform:scaleX(0.7852);transform-origin:100% 0;">0,0</div>
<div class="t" style="left:971.09px;top:696.43px;font-size:11.3px;font-weight:normal;font-style:normal;color:#333;transform:scaleX(0.7852);transform-origin:100% 0;">0,0</div>
<div class="abs" style="left:194px;top:716px;width:797px;height:29px;background:#f7f7f7"></div>
<div class="dot" style="left:194px;top:745px;width:797px;background:repeating-linear-gradient(90deg,#6a6a6a 0 1px,transparent 1px 2px)"></div>
<div class="t" style="left:199.20px;top:725.59px;font-size:12.3px;font-weight:bold;font-style:normal;color:#333;transform:scaleX(0.8705);transform-origin:0 0;">Décembre</div>
<div class="t" style="left:282.53px;top:726.43px;font-size:11.3px;font-weight:normal;font-style:normal;color:#333;transform:scaleX(0.7852);transform-origin:100% 0;">186,4</div>
<div class="t" style="left:334.53px;top:726.43px;font-size:11.3px;font-weight:normal;font-style:normal;color:#333;transform:scaleX(0.7852);transform-origin:100% 0;">196,6</div>
<div class="t" style="left:386.53px;top:726.43px;font-size:11.3px;font-weight:normal;font-style:normal;color:#333;transform:scaleX(0.7852);transform-origin:100% 0;">198,5</div>
<div class="t" style="left:438.53px;top:726.43px;font-size:11.3px;font-weight:normal;font-style:normal;color:#333;transform:scaleX(0.7852);transform-origin:100% 0;">198,2</div>
<div class="t" style="left:490.53px;top:726.43px;font-size:11.3px;font-weight:normal;font-style:normal;color:#333;transform:scaleX(0.7852);transform-origin:100% 0;">201,0</div>
<div class="t" style="left:542.53px;top:726.43px;font-size:11.3px;font-weight:normal;font-style:normal;color:#333;transform:scaleX(0.7852);transform-origin:100% 0;">199,6</div>
<div class="t" style="left:594.53px;top:726.43px;font-size:11.3px;font-weight:normal;font-style:normal;color:#333;transform:scaleX(0.7852);transform-origin:100% 0;">202,1</div>
<div class="t" style="left:646.53px;top:726.43px;font-size:11.3px;font-weight:normal;font-style:normal;color:#333;transform:scaleX(0.7852);transform-origin:100% 0;">206,3</div>
<div class="t" style="left:698.53px;top:726.43px;font-size:11.3px;font-weight:normal;font-style:normal;color:#333;transform:scaleX(0.7852);transform-origin:100% 0;">207,0</div>
<div class="t" style="left:750.53px;top:726.43px;font-size:11.3px;font-weight:normal;font-style:normal;color:#333;transform:scaleX(0.7852);transform-origin:100% 0;">208,6</div>
<div class="t" style="left:803.36px;top:726.43px;font-size:11.3px;font-weight:normal;font-style:normal;color:#333;transform:scaleX(0.7852);transform-origin:100% 0;">211,4</div>
<div class="t" style="left:854.53px;top:726.43px;font-size:11.3px;font-weight:normal;font-style:normal;color:#333;transform:scaleX(0.7852);transform-origin:100% 0;">227,3</div>
<div class="t" style="left:919.09px;top:726.43px;font-size:11.3px;font-weight:normal;font-style:normal;color:#333;transform:scaleX(0.7852);transform-origin:100% 0;">0,0</div>
<div class="t" style="left:971.09px;top:726.43px;font-size:11.3px;font-weight:normal;font-style:normal;color:#333;transform:scaleX(0.7852);transform-origin:100% 0;">0,0</div>
<div class="abs" style="left:194px;top:746px;width:797px;height:7px;background:#fff"></div>
<div class="vl" style="left:263px;top:386px;height:367px;background:#e2e2e2"></div>
<div class="vl" style="left:315px;top:386px;height:367px;background:#e2e2e2"></div>
<div class="vl" style="left:367px;top:386px;height:367px;background:#e2e2e2"></div>
<div class="vl" style="left:419px;top:386px;height:367px;background:#e2e2e2"></div>
<div class="vl" style="left:471px;top:386px;height:367px;background:#e2e2e2"></div>
<div class="vl" style="left:523px;top:386px;height:367px;background:#e2e2e2"></div>
<div class="vl" style="left:575px;top:386px;height:367px;background:#e2e2e2"></div>
<div class="vl" style="left:627px;top:386px;height:367px;background:#e2e2e2"></div>
<div class="vl" style="left:679px;top:386px;height:367px;background:#e2e2e2"></div>
<div class="vl" style="left:731px;top:386px;height:367px;background:#e2e2e2"></div>
<div class="vl" style="left:783px;top:386px;height:367px;background:#e2e2e2"></div>
<div class="vl" style="left:835px;top:386px;height:367px;background:#e2e2e2"></div>
<div class="vl" style="left:887px;top:386px;height:367px;background:#e2e2e2"></div>
<div class="vl" style="left:939px;top:386px;height:367px;background:#e2e2e2"></div>
<div class="vl" style="left:991px;top:386px;height:367px;background:#e2e2e2"></div>
<div class="abs" style="left:194px;top:753px;width:797px;height:1px;background:#e6e6e6"></div>
<div class="vl" style="left:194px;top:386px;height:367px;background:#e6e6e6"></div>
</body></html>
